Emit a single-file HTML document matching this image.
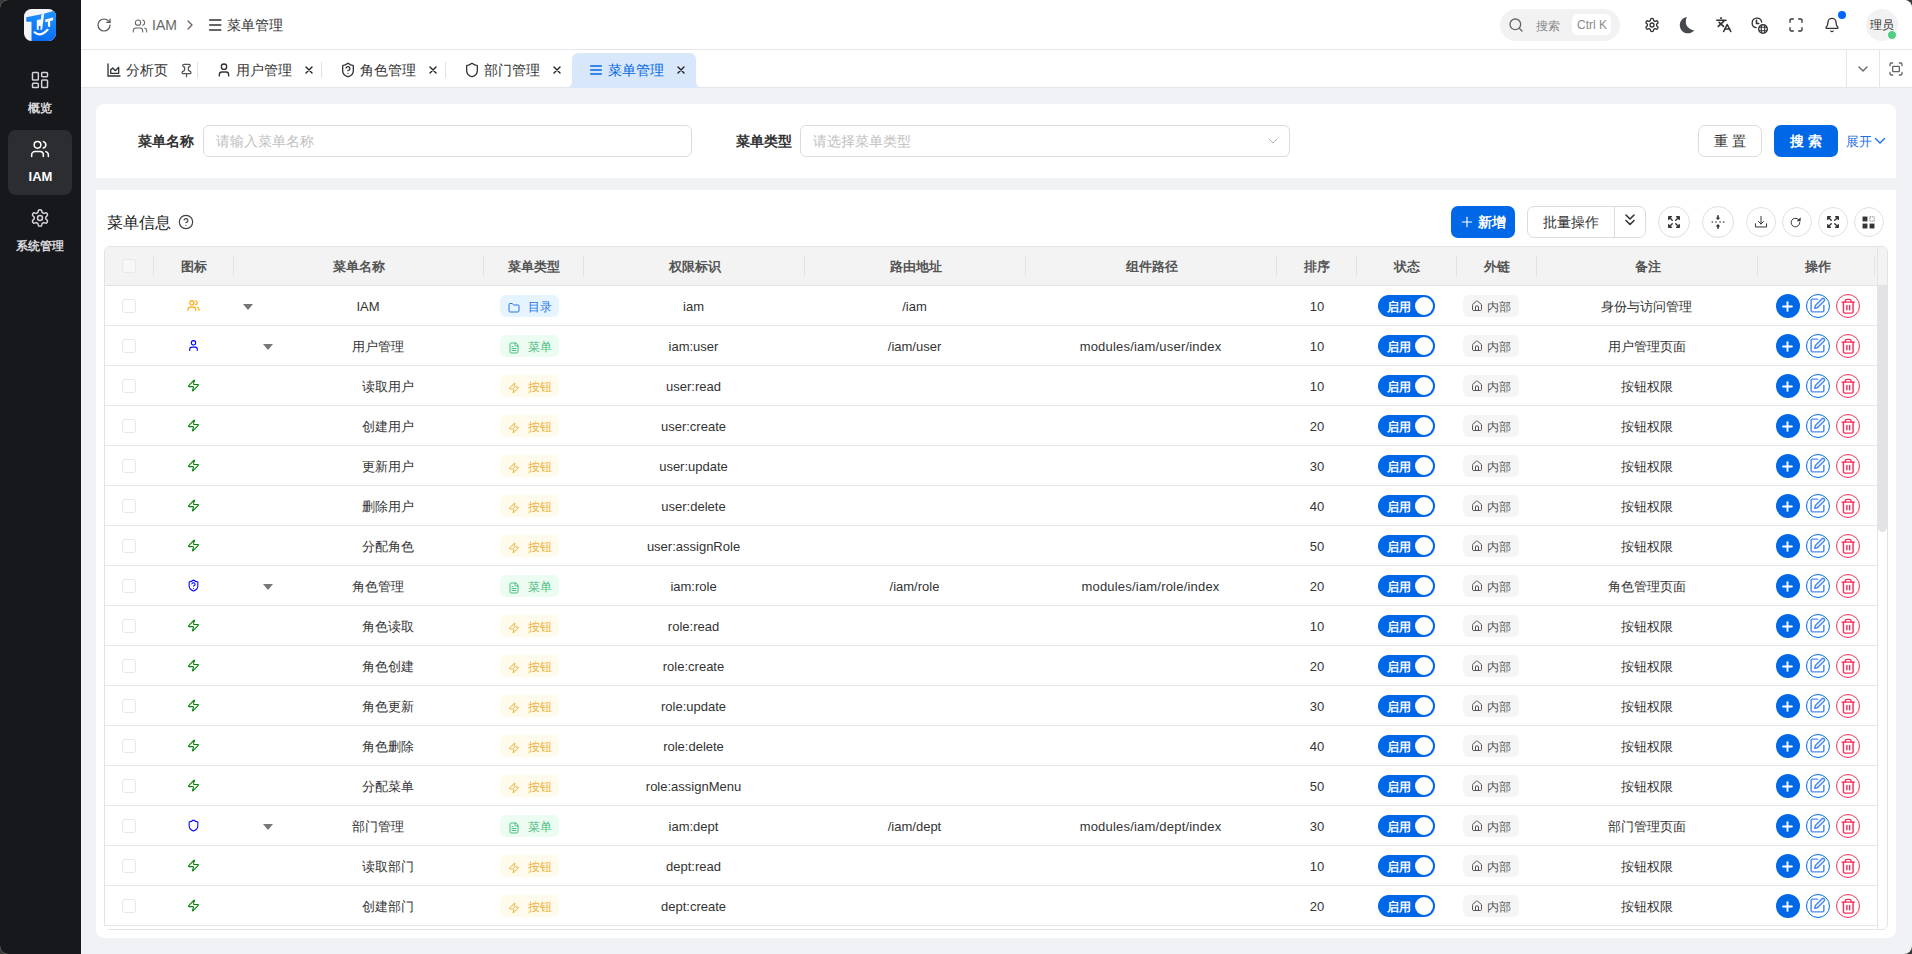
<!DOCTYPE html><html><head><meta charset="utf-8"><style>
*{box-sizing:border-box;margin:0;padding:0}
html,body{width:1912px;height:954px;overflow:hidden;background:#3a3a3a}
body{font-family:"Liberation Sans",sans-serif;color:#333;position:relative}
#win{position:absolute;left:0;top:0;width:1912px;height:954px;border-radius:8px;overflow:hidden;background:#f0f2f5}
.a{position:absolute;white-space:nowrap}
.ic{position:absolute;overflow:visible}
#side{position:absolute;left:0;top:0;width:81px;height:954px;background:#17181c}
#hdr{position:absolute;left:81px;top:0;right:0;height:50px;background:#fff;border-bottom:1px solid #e5e6ea}
#tabs{position:absolute;left:81px;top:50px;right:0;height:38px;background:#fff;border-bottom:1px solid #e5e6ea}
.card{position:absolute;background:#fff}
.t13{font-size:13px}
.th{position:absolute;top:247px;height:39px;font-size:13px;font-weight:bold;color:#555;padding-left:2px;text-align:center;line-height:39px}
.sep{position:absolute;width:1px;background:#e3e3e6}
.row{position:absolute;left:105px;width:1772px;height:40px;border-bottom:1px solid #e8e8ea;background:#fff}
.c{position:absolute;font-size:13px;color:#333;text-align:center;line-height:40px;top:0}
.cb{position:absolute;width:14px;height:14px;border:1px solid #e8e8ea;border-radius:3px;background:#fff}
.tag{position:absolute;height:22px;border-radius:6px;font-size:12px;line-height:22px}
.sw{position:absolute;width:57px;height:22px;border-radius:11px;background:#0068e6}
.knob{position:absolute;left:37px;top:2px;width:18px;height:18px;border-radius:50%;background:#fff}
.swt{position:absolute;left:9px;top:1px;font-size:12px;line-height:22px;color:#fff;font-weight:bold}
.ab{position:absolute;width:24px;height:24px;border-radius:50%}
</style></head><body><div id="win">
<div id="side">
<svg class="ic" style="left:24px;top:9px;width:32px;height:32px" viewBox="0 0 32 32">
<defs><linearGradient id="lg" x1="0.6" y1="0" x2="0.4" y2="1"><stop offset="0" stop-color="#1f93ff"/><stop offset="1" stop-color="#0a6cf0"/></linearGradient>
<clipPath id="lc"><rect width="32" height="32" rx="7.5"/></clipPath></defs>
<g clip-path="url(#lc)"><rect width="32" height="32" fill="#f3f6fa"/>
<path d="M2.3 8.2L17.2 5.3L19.9 4.8L32 1.2V32H7.5V12.8H2.3Z" fill="url(#lg)"/>
<path d="M17.3 5.4L20.2 4.7L18.1 20.7H12.8V11.1L17.0 10.3Z" fill="#f6f9fd"/>
<rect x="14.8" y="17" width="1.7" height="3.7" fill="#0d72f2"/>
<path d="M21.2 10.6L29.1 8.5V11.2L26.2 11.9V17.8H23.9V12.5L21.2 13.2Z" fill="#fff"/>
<path d="M10.6 23.3Q16.2 28.6 23.6 20.8" stroke="#fff" stroke-width="2.1" fill="none" stroke-linecap="round"/>
</g></svg>
<svg class="ic" style="left:30px;top:70px;width:20px;height:20px" viewBox="0 0 24 24" fill="none" stroke="#d4d4d8" stroke-width="1.8" stroke-linecap="round" stroke-linejoin="round" ><rect width="7" height="9" x="3" y="3" rx="1"/><rect width="7" height="5" x="14" y="3" rx="1"/><rect width="7" height="9" x="14" y="12" rx="1"/><rect width="7" height="5" x="3" y="16" rx="1"/></svg>
<div class="a" style="left:-1px;width:81px;text-align:center;top:99px;font-size:12px;line-height:18px;color:#d8d8dc;font-weight:bold">概览</div>
<div class="a" style="left:8px;top:130px;width:64px;height:65px;border-radius:8px;background:#2c2d31"></div>
<svg class="ic" style="left:30px;top:139px;width:20px;height:20px" viewBox="0 0 24 24" fill="none" stroke="#ffffff" stroke-width="1.8" stroke-linecap="round" stroke-linejoin="round" ><path d="M16 21v-2a4 4 0 0 0-4-4H6a4 4 0 0 0-4 4v2"/><circle cx="9" cy="7" r="4"/><path d="M22 21v-2a4 4 0 0 0-3-3.87"/><path d="M16 3.13a4 4 0 0 1 0 7.75"/></svg>
<div class="a" style="left:0;width:81px;text-align:center;top:168px;font-size:13px;line-height:18px;color:#fff;font-weight:bold">IAM</div>
<svg class="ic" style="left:30px;top:208px;width:20px;height:20px" viewBox="0 0 24 24" fill="none" stroke="#d4d4d8" stroke-width="1.8" stroke-linecap="round" stroke-linejoin="round" ><path d="M12.22 2h-.44a2 2 0 0 0-2 2v.18a2 2 0 0 1-1 1.73l-.43.25a2 2 0 0 1-2 0l-.15-.08a2 2 0 0 0-2.73.73l-.22.38a2 2 0 0 0 .73 2.730l.15.1a2 2 0 0 1 1 1.72v.51a2 2 0 0 1-1 1.74l-.15.09a2 2 0 0 0-.73 2.73l.22.38a2 2 0 0 0 2.73.73l.15-.08a2 2 0 0 1 2 0l.43.25a2 2 0 0 1 1 1.73V20a2 2 0 0 0 2 2h.44a2 2 0 0 0 2-2v-.18a2 2 0 0 1 1-1.73l.43-.25a2 2 0 0 1 2 0l.15.08a2 2 0 0 0 2.73-.73l.22-.39a2 2 0 0 0-.73-2.73l-.15-.08a2 2 0 0 1-1-1.74v-.5a2 2 0 0 1 1-1.74l.15-.09a2 2 0 0 0 .73-2.73l-.22-.38a2 2 0 0 0-2.73-.73l-.15.08a2 2 0 0 1-2 0l-.43-.25a2 2 0 0 1-1-1.73V4a2 2 0 0 0-2-2z"/><circle cx="12" cy="12" r="3"/></svg>
<div class="a" style="left:-1px;width:81px;text-align:center;top:237px;font-size:12px;line-height:18px;color:#d8d8dc;font-weight:bold">系统管理</div>
</div>
<div id="hdr"></div>
<svg class="ic" style="left:96px;top:17px;width:16px;height:16px" viewBox="0 0 24 24" fill="none" stroke="#555" stroke-width="1.8" stroke-linecap="round" stroke-linejoin="round" ><path d="M21 12a9 9 0 1 1-9-9c2.52 0 4.93 1 6.74 2.74L21 8"/><path d="M21 3v5h-5"/></svg>
<svg class="ic" style="left:132px;top:18px;width:16px;height:16px" viewBox="0 0 24 24" fill="none" stroke="#666" stroke-width="1.6" stroke-linecap="round" stroke-linejoin="round" ><path d="M16 21v-2a4 4 0 0 0-4-4H6a4 4 0 0 0-4 4v2"/><circle cx="9" cy="7" r="4"/><path d="M22 21v-2a4 4 0 0 0-3-3.87"/><path d="M16 3.13a4 4 0 0 1 0 7.75"/></svg>
<div class="a" style="left:152px;top:16px;font-size:14px;line-height:18px;color:#666">IAM</div>
<svg class="ic" style="left:182px;top:17px;width:16px;height:16px" viewBox="0 0 24 24" fill="none" stroke="#666" stroke-width="2" stroke-linecap="round" stroke-linejoin="round" ><path d="m9 18 6-6-6-6"/></svg>
<svg class="ic" style="left:207px;top:16px;width:16px;height:18px" viewBox="0 0 16 18" fill="none" stroke="#333" stroke-width="1.5" stroke-linecap="round"><path d="M2.6 4.1h11.2M2.6 9h11.2M2.6 13.9h11.2"/></svg>
<div class="a" style="left:227px;top:16px;font-size:14px;line-height:18px;color:#333">菜单管理</div>
<div class="a" style="left:1500px;top:9px;width:120px;height:32px;border-radius:16px;background:#f2f2f3"></div>
<svg class="ic" style="left:1508px;top:17px;width:16px;height:16px" viewBox="0 0 24 24" fill="none" stroke="#666" stroke-width="2" stroke-linecap="round" stroke-linejoin="round" ><circle cx="11" cy="11" r="8"/><path d="m21 21-4.3-4.3"/></svg>
<div class="a" style="left:1536px;top:18px;font-size:12px;line-height:16px;color:#8a8a8a">搜索</div>
<div class="a" style="left:1572px;top:14px;width:39px;height:21px;border-radius:6px;background:#fff"></div>
<div class="a" style="left:1577px;top:17px;font-size:12px;line-height:16px;color:#8a8a8a">Ctrl K</div>
<svg class="ic" style="left:1644px;top:17px;width:16px;height:16px" viewBox="0 0 24 24" fill="none" stroke="#333" stroke-width="2" stroke-linecap="round" stroke-linejoin="round" ><path d="M12.22 2h-.44a2 2 0 0 0-2 2v.18a2 2 0 0 1-1 1.73l-.43.25a2 2 0 0 1-2 0l-.15-.08a2 2 0 0 0-2.73.73l-.22.38a2 2 0 0 0 .73 2.730l.15.1a2 2 0 0 1 1 1.72v.51a2 2 0 0 1-1 1.74l-.15.09a2 2 0 0 0-.73 2.73l.22.38a2 2 0 0 0 2.73.73l.15-.08a2 2 0 0 1 2 0l.43.25a2 2 0 0 1 1 1.73V20a2 2 0 0 0 2 2h.44a2 2 0 0 0 2-2v-.18a2 2 0 0 1 1-1.73l.43-.25a2 2 0 0 1 2 0l.15.08a2 2 0 0 0 2.73-.73l.22-.39a2 2 0 0 0-.73-2.73l-.15-.08a2 2 0 0 1-1-1.74v-.5a2 2 0 0 1 1-1.74l.15-.09a2 2 0 0 0 .73-2.73l-.22-.38a2 2 0 0 0-2.73-.73l-.15.08a2 2 0 0 1-2 0l-.43-.25a2 2 0 0 1-1-1.73V4a2 2 0 0 0-2-2z"/><circle cx="12" cy="12" r="3"/></svg>
<svg class="ic" style="left:1670px;top:10px;width:30px;height:30px" viewBox="0 0 30 30"><path d="M17 6.9C11.5 8 9.6 12 9.8 15.5C10 20 13.5 23.3 17.5 23.3C20.5 23.3 22.8 21.8 24.3 20.4C19 19.8 15.6 15.5 15.8 11.5C15.9 9.5 16.3 8 17 6.9Z" fill="#45484d"/></svg>
<svg class="ic" style="left:1710px;top:12px;width:62px;height:26px" viewBox="0 0 62 26" fill="none" stroke="#2f3135" stroke-width="1.6" stroke-linecap="round" stroke-linejoin="round">
<defs><clipPath id="gc"><circle cx="53" cy="17" r="4.3"/></clipPath></defs>
<path d="M10.7 6.1h0.7"/><path d="M6.8 8.3h9.1"/><path d="M13.9 9.1L8.3 14.4"/><path d="M9.1 10.4L13.5 14.4"/><path d="M13.6 19.5L17.2 12.5L20.8 19.5"/><path d="M14.9 17h4.6"/>
<path d="M51.7 10.2A4.8 4.8 0 1 0 46.2 15.7" stroke-width="1.3"/><path d="M46.5 8.3V11.5H48.7"/>
<circle cx="53" cy="17" r="4.3" stroke-width="1.4"/><g clip-path="url(#gc)" stroke-width="1.1"><path d="M51.3 12v10M54.7 12v10M48 15.3h10M48 18.7h10"/></g>
</svg>
<svg class="ic" style="left:1788px;top:17px;width:16px;height:16px" viewBox="0 0 24 24" fill="none" stroke="#333" stroke-width="2" stroke-linecap="round" stroke-linejoin="round" ><path d="M8 3H5a2 2 0 0 0-2 2v3"/><path d="M21 8V5a2 2 0 0 0-2-2h-3"/><path d="M3 16v3a2 2 0 0 0 2 2h3"/><path d="M16 21h3a2 2 0 0 0 2-2v-3"/></svg>
<svg class="ic" style="left:1824px;top:17px;width:16px;height:16px" viewBox="0 0 24 24" fill="none" stroke="#333" stroke-width="2" stroke-linecap="round" stroke-linejoin="round" ><path d="M10.268 21a2 2 0 0 0 3.464 0"/><path d="M3.262 15.326A1 1 0 0 0 4 17h16a1 1 0 0 0 .74-1.673C19.41 13.956 18 12.499 18 8A6 6 0 0 0 6 8c0 4.499-1.411 5.956-2.738 7.326"/></svg>
<div class="a" style="left:1838px;top:11px;width:8px;height:8px;border-radius:50%;background:#0066ff"></div>
<div class="a" style="left:1866px;top:9px;width:32px;height:32px;border-radius:50%;background:#f2f2f3"></div>
<div class="a" style="left:1870px;top:17px;font-size:12px;line-height:16px;color:#333">理员</div>
<div class="a" style="left:1887px;top:30px;width:10px;height:10px;border-radius:50%;background:#4fcf80;border:1.5px solid #fff"></div>
<div id="tabs"></div>
<svg class="ic" style="left:565px;top:53px;width:138px;height:35px" viewBox="0 0 138 35"><path d="M0 35Q7 35 7 28V7Q7 0 14 0H124Q131 0 131 7V28Q131 35 138 35Z" fill="#d9e7fb"/></svg>
<svg class="ic" style="left:106px;top:62px;width:16px;height:16px" viewBox="0 0 24 24" fill="none" stroke="#333" stroke-width="2" stroke-linecap="round" stroke-linejoin="round" ><path d="M3 3v18h18"/><path d="M7 12v5h12V8l-5 5-4-4Z"/></svg>
<div class="a" style="left:126px;top:61px;font-size:14px;line-height:18px;color:#333">分析页</div>
<svg class="ic" style="left:179px;top:63px;width:15px;height:15px" viewBox="0 0 24 24" fill="none" stroke="#555" stroke-width="2" stroke-linecap="round" stroke-linejoin="round" ><path d="M12 17v5"/><path d="M9 10.76a2 2 0 0 1-1.11 1.79l-1.78.9A2 2 0 0 0 5 15.24V16a1 1 0 0 0 1 1h12a1 1 0 0 0 1-1v-.76a2 2 0 0 0-1.11-1.79l-1.78-.9A2 2 0 0 1 15 10.76V7a1 1 0 0 1 1-1 2 2 0 0 0 0-4H8a2 2 0 0 0 0 4 1 1 0 0 1 1 1z"/></svg>
<div class="sep" style="left:197px;top:62px;height:16px;background:#e0e0e3"></div>
<svg class="ic" style="left:216px;top:62px;width:16px;height:16px" viewBox="0 0 24 24" fill="none" stroke="#333" stroke-width="2" stroke-linecap="round" stroke-linejoin="round" ><path d="M19 21v-2a4 4 0 0 0-4-4H9a4 4 0 0 0-4 4v2"/><circle cx="12" cy="7" r="4"/></svg>
<div class="a" style="left:236px;top:61px;font-size:14px;line-height:18px;color:#333">用户管理</div>
<svg class="ic" style="left:304px;top:65px;width:10px;height:10px" viewBox="0 0 10 10" fill="none" stroke="#222" stroke-width="1.4" stroke-linecap="round"><path d="M2 2L8 8M8 2L2 8"/></svg>
<div class="sep" style="left:321px;top:62px;height:16px;background:#e0e0e3"></div>
<svg class="ic" style="left:340px;top:62px;width:16px;height:16px" viewBox="0 0 24 24" fill="none" stroke="#333" stroke-width="2" stroke-linecap="round" stroke-linejoin="round" ><path d="M20 13c0 5-3.5 7.5-7.66 8.95a1 1 0 0 1-.67-.01C7.5 20.5 4 18 4 13V6a1 1 0 0 1 1-1c2 0 4.5-1.2 6.24-2.72a1.17 1.17 0 0 1 1.52 0C14.51 3.81 17 5 19 5a1 1 0 0 1 1 1z"/><path d="M9.1 9a3 3 0 0 1 5.82 1c0 2-3 3-3 3"/><path d="M12 17h.01"/></svg>
<div class="a" style="left:360px;top:61px;font-size:14px;line-height:18px;color:#333">角色管理</div>
<svg class="ic" style="left:428.2px;top:65px;width:10px;height:10px" viewBox="0 0 10 10" fill="none" stroke="#222" stroke-width="1.4" stroke-linecap="round"><path d="M2 2L8 8M8 2L2 8"/></svg>
<div class="sep" style="left:445px;top:62px;height:16px;background:#e0e0e3"></div>
<svg class="ic" style="left:464px;top:62px;width:16px;height:16px" viewBox="0 0 24 24" fill="none" stroke="#333" stroke-width="2" stroke-linecap="round" stroke-linejoin="round" ><path d="M20 13c0 5-3.5 7.5-7.66 8.95a1 1 0 0 1-.67-.01C7.5 20.5 4 18 4 13V6a1 1 0 0 1 1-1c2 0 4.5-1.2 6.24-2.72a1.17 1.17 0 0 1 1.52 0C14.51 3.81 17 5 19 5a1 1 0 0 1 1 1z"/></svg>
<div class="a" style="left:484px;top:61px;font-size:14px;line-height:18px;color:#333">部门管理</div>
<svg class="ic" style="left:552px;top:65px;width:10px;height:10px" viewBox="0 0 10 10" fill="none" stroke="#222" stroke-width="1.4" stroke-linecap="round"><path d="M2 2L8 8M8 2L2 8"/></svg>
<svg class="ic" style="left:588px;top:62px;width:16px;height:16px" viewBox="0 0 24 24" fill="none" stroke="#0068e6" stroke-width="2" stroke-linecap="round" stroke-linejoin="round" ><path d="M4 6h16M4 12h16M4 18h16"/></svg>
<div class="a" style="left:608px;top:61px;font-size:14px;line-height:18px;color:#0068e6">菜单管理</div>
<svg class="ic" style="left:676.2px;top:65px;width:10px;height:10px" viewBox="0 0 10 10" fill="none" stroke="#222" stroke-width="1.4" stroke-linecap="round"><path d="M2 2L8 8M8 2L2 8"/></svg>
<div class="sep" style="left:1846px;top:50px;height:37px;background:#e5e6ea"></div>
<div class="sep" style="left:1879px;top:50px;height:37px;background:#e5e6ea"></div>
<svg class="ic" style="left:1855px;top:61px;width:16px;height:16px" viewBox="0 0 24 24" fill="none" stroke="#666" stroke-width="2" stroke-linecap="round" stroke-linejoin="round" ><path d="m6 9 6 6 6-6"/></svg>
<svg class="ic" style="left:1888px;top:61px;width:16px;height:16px" viewBox="0 0 24 24" fill="none" stroke="#666" stroke-width="2" stroke-linecap="round" stroke-linejoin="round" ><path d="M7 3H5a2 2 0 0 0-2 2v2"/><path d="M21 7V5a2 2 0 0 0-2-2h-2"/><path d="M3 17v2a2 2 0 0 0 2 2h2"/><path d="M17 21h2a2 2 0 0 0 2-2v-2"/><rect x="7" y="8" width="10" height="8" rx="1"/></svg>
<div class="card" style="left:96px;top:104px;width:1800px;height:74px;border-radius:8px 8px 0 0"></div>
<div class="a" style="left:138px;top:132px;font-size:14px;line-height:18px;font-weight:bold;color:#333">菜单名称</div>
<div class="a" style="left:203px;top:125px;width:489px;height:32px;border:1px solid #dcdcdf;border-radius:6px"></div>
<div class="a" style="left:216px;top:132px;font-size:14px;line-height:18px;color:#bfbfbf">请输入菜单名称</div>
<div class="a" style="left:736px;top:132px;font-size:14px;line-height:18px;font-weight:bold;color:#333">菜单类型</div>
<div class="a" style="left:800px;top:125px;width:490px;height:32px;border:1px solid #dcdcdf;border-radius:6px"></div>
<div class="a" style="left:813px;top:132px;font-size:14px;line-height:18px;color:#bfbfbf">请选择菜单类型</div>
<svg class="ic" style="left:1265px;top:133px;width:16px;height:16px" viewBox="0 0 24 24" fill="none" stroke="#b0b0b0" stroke-width="1.5" stroke-linecap="round" stroke-linejoin="round" ><path d="m6 9 6 6 6-6"/></svg>
<div class="a" style="left:1698px;top:125px;width:64px;height:32px;border:1px solid #dcdcdf;border-radius:7px"></div>
<div class="a" style="left:1698px;top:132px;width:64px;text-align:center;font-size:14px;line-height:18px;color:#333;letter-spacing:4px;padding-left:4px">重置</div>
<div class="a" style="left:1774px;top:125px;width:64px;height:32px;border-radius:7px;background:#0068e6"></div>
<div class="a" style="left:1774px;top:132px;width:64px;text-align:center;font-size:14px;line-height:18px;color:#fff;letter-spacing:4px;padding-left:4px;font-weight:bold">搜索</div>
<div class="a" style="left:1846px;top:133px;font-size:13px;line-height:18px;color:#1a6fe8">展开</div>
<svg class="ic" style="left:1874px;top:137px;width:12px;height:8px" viewBox="0 0 12 8" fill="none" stroke="#1a6fe8" stroke-width="1.4" stroke-linecap="round" stroke-linejoin="round"><path d="M1.5 1.5l4.5 4.5 4.5-4.5"/></svg>
<div class="card" style="left:96px;top:190px;width:1800px;height:748px;border-radius:0 0 8px 8px"></div>
<div class="a" style="left:107px;top:213px;font-size:16px;line-height:20px;color:#222">菜单信息</div>
<svg class="ic" style="left:178px;top:214px;width:16px;height:16px" viewBox="0 0 24 24" fill="none" stroke="#444" stroke-width="1.8" stroke-linecap="round" stroke-linejoin="round" ><circle cx="12" cy="12" r="10"/><path d="M9.09 9a3 3 0 0 1 5.83 1c0 2-3 3-3 3"/><path d="M12 17h.01"/></svg>
<div class="a" style="left:1451px;top:206px;width:64px;height:32px;border-radius:7px;background:#0068e6"></div>
<svg class="ic" style="left:1459px;top:214px;width:16px;height:16px" viewBox="0 0 24 24" fill="none" stroke="#fff" stroke-width="1.7" stroke-linecap="round" stroke-linejoin="round" ><path d="M5 12h14"/><path d="M12 5v14"/></svg>
<div class="a" style="left:1478px;top:213px;font-size:14px;line-height:18px;color:#fff;font-weight:bold">新增</div>
<div class="a" style="left:1527px;top:206px;width:119px;height:32px;border:1px solid #dcdcdf;border-radius:7px"></div>
<div class="sep" style="left:1614px;top:206px;height:32px;background:#dcdcdf"></div>
<div class="a" style="left:1543px;top:213px;font-size:14px;line-height:18px;color:#333">批量操作</div>
<svg class="ic" style="left:1624px;top:213px;width:12px;height:14px" viewBox="0 0 12 14" fill="none" stroke="#333" stroke-width="1.6" stroke-linecap="round" stroke-linejoin="round"><path d="M2 2l4 4 4-4M2 7.5l4 4 4-4"/></svg>
<div class="a" style="left:1658px;top:206px;width:32px;height:32px;border-radius:50%;border:1px solid #e0e0e3"></div>
<div class="a" style="left:1702px;top:206px;width:32px;height:32px;border-radius:50%;border:1px solid #e0e0e3"></div>
<div class="a" style="left:1746px;top:207px;width:30px;height:30px;border-radius:50%;border:1px solid #e0e0e3"></div>
<div class="a" style="left:1782px;top:207px;width:30px;height:30px;border-radius:50%;border:1px solid #e0e0e3"></div>
<div class="a" style="left:1818px;top:207px;width:30px;height:30px;border-radius:50%;border:1px solid #e0e0e3"></div>
<div class="a" style="left:1854px;top:207px;width:30px;height:30px;border-radius:50%;border:1px solid #e0e0e3"></div>
<svg class="ic" style="left:1667px;top:215px;width:14px;height:14px" viewBox="0 0 24 24" fill="none" stroke="#333" stroke-width="2.4" stroke-linecap="round" stroke-linejoin="round" ><path d="M3 3l6 6M3 3v4.5M3 3h4.5M21 3l-6 6M21 3v4.5M21 3h-4.5M3 21l6-6M3 21v-4.5M3 21h4.5M21 21l-6-6M21 21v-4.5M21 21h-4.5"/></svg>
<svg class="ic" style="left:1711px;top:215px;width:14px;height:14px" viewBox="0 0 24 24" fill="#333" stroke="none"><path d="M12 8.5l-4-4h2.6V0.5h2.8v4H16z"/><path d="M12 15.5l-4 4h2.6v4h2.8v-4H16z"/><rect x="1" y="11" width="2.6" height="2"/><rect x="7.2" y="11" width="2.6" height="2"/><rect x="14.2" y="11" width="2.6" height="2"/><rect x="20.4" y="11" width="2.6" height="2"/></svg>
<svg class="ic" style="left:1754px;top:215px;width:14px;height:14px" viewBox="0 0 24 24" fill="none" stroke="#333" stroke-width="1.7" stroke-linecap="round" stroke-linejoin="round"><path d="M2.5 15v5.5h19V15"/><path d="M12 2.5v13M7.5 11l4.5 4.5 4.5-4.5"/></svg>
<svg class="ic" style="left:1789px;top:216px;width:13px;height:13px" viewBox="0 0 24 24" fill="none" stroke="#333" stroke-width="1.8" stroke-linecap="round" stroke-linejoin="round"><path d="M20 12a8 8 0 1 1-2.5-5.8"/></svg>
<svg class="ic" style="left:1789px;top:216px;width:13px;height:13px" viewBox="0 0 24 24" fill="#333" stroke="none"><path d="M21.5 2.5v7h-7z"/></svg>
<svg class="ic" style="left:1826px;top:215px;width:14px;height:14px" viewBox="0 0 24 24" fill="none" stroke="#333" stroke-width="2.4" stroke-linecap="round" stroke-linejoin="round" ><path d="M3 3l6 6M3 3v4.5M3 3h4.5M21 3l-6 6M21 3v4.5M21 3h-4.5M3 21l6-6M3 21v-4.5M3 21h4.5M21 21l-6-6M21 21v-4.5M21 21h-4.5"/></svg>
<svg class="ic" style="left:1862px;top:216px;width:13px;height:13px" viewBox="0 0 24 24"><rect x="1" y="1" width="9" height="9" fill="#333"/><rect x="14" y="14" width="9" height="9" fill="#333"/><rect x="1" y="14" width="9" height="9" fill="#333"/><rect x="14.5" y="1.5" width="8" height="8" fill="none" stroke="#333" stroke-width="1.2" stroke-dasharray="2 1.5"/></svg>
<div class="a" style="left:104px;top:246px;width:1784px;height:684px;border:1px solid #e3e3e6;border-radius:6px;overflow:hidden;background:#fff">
<div class="a" style="left:0;top:0;width:1782px;height:39px;background:#f3f3f4;border-bottom:1px solid #e3e3e6"></div>
</div>
<div class="sep" style="left:153px;top:256px;height:20px"></div>
<div class="th" style="left:153px;width:80px">图标</div>
<div class="sep" style="left:233px;top:256px;height:20px"></div>
<div class="th" style="left:233px;width:250px">菜单名称</div>
<div class="sep" style="left:483px;top:256px;height:20px"></div>
<div class="th" style="left:483px;width:100px">菜单类型</div>
<div class="sep" style="left:583px;top:256px;height:20px"></div>
<div class="th" style="left:583px;width:221px">权限标识</div>
<div class="sep" style="left:804px;top:256px;height:20px"></div>
<div class="th" style="left:804px;width:221px">路由地址</div>
<div class="sep" style="left:1025px;top:256px;height:20px"></div>
<div class="th" style="left:1025px;width:251px">组件路径</div>
<div class="sep" style="left:1276px;top:256px;height:20px"></div>
<div class="th" style="left:1276px;width:80px">排序</div>
<div class="sep" style="left:1356px;top:256px;height:20px"></div>
<div class="th" style="left:1356px;width:100px">状态</div>
<div class="sep" style="left:1456px;top:256px;height:20px"></div>
<div class="th" style="left:1456px;width:80px">外链</div>
<div class="sep" style="left:1536px;top:256px;height:20px"></div>
<div class="th" style="left:1536px;width:221px">备注</div>
<div class="sep" style="left:1757px;top:256px;height:20px"></div>
<div class="th" style="left:1757px;width:120px">操作</div>
<div class="sep" style="left:1874px;top:256px;height:20px"></div>
<div class="cb" style="left:122px;top:259px;background:#f7f7f8"></div>
<div class="row" style="top:286px"></div>
<div class="cb" style="left:122px;top:299px"></div>
<svg class="ic" style="left:187px;top:299px;width:13px;height:13px" viewBox="0 0 24 24" fill="none" stroke="orange" stroke-width="2" stroke-linecap="round" stroke-linejoin="round" ><path d="M16 21v-2a4 4 0 0 0-4-4H6a4 4 0 0 0-4 4v2"/><circle cx="9" cy="7" r="4"/><path d="M22 21v-2a4 4 0 0 0-3-3.87"/><path d="M16 3.13a4 4 0 0 1 0 7.75"/></svg>
<svg class="ic" style="left:243px;top:304px;width:10px;height:6px" viewBox="0 0 10 6"><path d="M0 0H10L5 6Z" fill="#777"/></svg>
<div class="c" style="left:268px;width:200px;top:287px">IAM</div>
<div class="tag" style="left:500px;top:295px;width:59px;background:#e6f4ff"></div>
<svg class="ic" style="left:508px;top:301.5px;width:12px;height:12px" viewBox="0 0 24 24" fill="none" stroke="#2374ec" stroke-width="2" stroke-linecap="round" stroke-linejoin="round" ><path d="M20 20a2 2 0 0 0 2-2V8a2 2 0 0 0-2-2h-7.9a2 2 0 0 1-1.69-.9L9.6 3.9A2 2 0 0 0 7.930 3H4a2 2 0 0 0-2 2v13a2 2 0 0 0 2 2Z"/></svg>
<div class="a" style="left:528px;top:299px;font-size:12px;line-height:16px;color:#2374ec">目录</div>
<div class="c" style="left:583px;width:221px;top:287px">iam</div>
<div class="c" style="left:804px;width:221px;top:287px">/iam</div>
<div class="c" style="left:1277px;width:80px;top:287px">10</div>
<div class="sw" style="left:1378px;top:295px"><span class="swt">启用</span><span class="knob"></span></div>
<div class="tag" style="left:1463px;top:295px;width:56px;background:#f5f5f6"></div>
<svg class="ic" style="left:1471px;top:300px;width:12px;height:12px" viewBox="0 0 24 24" fill="none" stroke="#555" stroke-width="2" stroke-linecap="round" stroke-linejoin="round" ><path d="M15 21v-8a1 1 0 0 0-1-1h-4a1 1 0 0 0-1 1v8"/><path d="M3 10a2 2 0 0 1 .709-1.528l7-5.999a2 2 0 0 1 2.582 0l7 5.999A2 2 0 0 1 21 10v9a2 2 0 0 1-2 2H5a2 2 0 0 1-2-2z"/></svg>
<div class="a" style="left:1487px;top:299px;font-size:12px;line-height:16px;color:#555">内部</div>
<div class="c" style="left:1536px;width:221px;top:287px">身份与访问管理</div>
<div class="ab" style="left:1776px;top:294px;background:#0068e6"></div>
<svg class="ic" style="left:1780px;top:298.5px;width:15px;height:15px" viewBox="0 0 24 24" fill="none" stroke="#fff" stroke-width="3.1" stroke-linecap="round" stroke-linejoin="round" ><path d="M5 12h14"/><path d="M12 5v14"/></svg>
<div class="ab" style="left:1806px;top:294px;border:1.5px solid #0068e6"></div>
<svg class="ic" style="left:1809px;top:297px;width:17px;height:17px" viewBox="0 0 24 24" fill="none" stroke="#4a8af4" stroke-width="2.1" stroke-linecap="round" stroke-linejoin="round" ><path d="M12 3H5a2 2 0 0 0-2 2v14a2 2 0 0 0 2 2h14a2 2 0 0 0 2-2v-7"/><path d="M18.375 2.625a1 1 0 0 1 3 3l-9.013 9.014a2 2 0 0 1-.853.505l-2.873.84a.5.5 0 0 1-.62-.62l.84-2.873a2 2 0 0 1 .506-.852z"/></svg>
<div class="ab" style="left:1836px;top:294px;border:1.5px solid #f5315a"></div>
<svg class="ic" style="left:1839.5px;top:297.5px;width:16.5px;height:16.5px" viewBox="0 0 24 24" fill="none" stroke="#f5315a" stroke-width="2.1" stroke-linecap="round" stroke-linejoin="round" ><path d="M3 6h18"/><path d="M19 6v14c0 1-1 2-2 2H7c-1 0-2-1-2-2V6"/><path d="M8 6V4c0-1 1-2 2-2h4c1 0 2 1 2 2v2"/><line x1="10" x2="10" y1="11" y2="17"/><line x1="14" x2="14" y1="11" y2="17"/></svg>
<div class="row" style="top:326px"></div>
<div class="cb" style="left:122px;top:339px"></div>
<svg class="ic" style="left:187px;top:339px;width:13px;height:13px" viewBox="0 0 24 24" fill="none" stroke="blue" stroke-width="2" stroke-linecap="round" stroke-linejoin="round" ><path d="M19 21v-2a4 4 0 0 0-4-4H9a4 4 0 0 0-4 4v2"/><circle cx="12" cy="7" r="4"/></svg>
<svg class="ic" style="left:263px;top:344px;width:10px;height:6px" viewBox="0 0 10 6"><path d="M0 0H10L5 6Z" fill="#777"/></svg>
<div class="c" style="left:278px;width:200px;top:327px">用户管理</div>
<div class="tag" style="left:500px;top:335px;width:59px;background:#edfcf2"></div>
<svg class="ic" style="left:508px;top:341.5px;width:12px;height:12px" viewBox="0 0 24 24" fill="none" stroke="#45c07c" stroke-width="2" stroke-linecap="round" stroke-linejoin="round" ><path d="M15 2H6a2 2 0 0 0-2 2v16a2 2 0 0 0 2 2h12a2 2 0 0 0 2-2V7Z"/><path d="M14 2v4a2 2 0 0 0 2 2h4"/><path d="M10 9H8"/><path d="M16 13H8"/><path d="M16 17H8"/></svg>
<div class="a" style="left:528px;top:339px;font-size:12px;line-height:16px;color:#45c07c">菜单</div>
<div class="c" style="left:583px;width:221px;top:327px">iam:user</div>
<div class="c" style="left:804px;width:221px;top:327px">/iam/user</div>
<div class="c" style="left:1025px;width:251px;top:327px;letter-spacing:0.2px">modules/iam/user/index</div>
<div class="c" style="left:1277px;width:80px;top:327px">10</div>
<div class="sw" style="left:1378px;top:335px"><span class="swt">启用</span><span class="knob"></span></div>
<div class="tag" style="left:1463px;top:335px;width:56px;background:#f5f5f6"></div>
<svg class="ic" style="left:1471px;top:340px;width:12px;height:12px" viewBox="0 0 24 24" fill="none" stroke="#555" stroke-width="2" stroke-linecap="round" stroke-linejoin="round" ><path d="M15 21v-8a1 1 0 0 0-1-1h-4a1 1 0 0 0-1 1v8"/><path d="M3 10a2 2 0 0 1 .709-1.528l7-5.999a2 2 0 0 1 2.582 0l7 5.999A2 2 0 0 1 21 10v9a2 2 0 0 1-2 2H5a2 2 0 0 1-2-2z"/></svg>
<div class="a" style="left:1487px;top:339px;font-size:12px;line-height:16px;color:#555">内部</div>
<div class="c" style="left:1536px;width:221px;top:327px">用户管理页面</div>
<div class="ab" style="left:1776px;top:334px;background:#0068e6"></div>
<svg class="ic" style="left:1780px;top:338.5px;width:15px;height:15px" viewBox="0 0 24 24" fill="none" stroke="#fff" stroke-width="3.1" stroke-linecap="round" stroke-linejoin="round" ><path d="M5 12h14"/><path d="M12 5v14"/></svg>
<div class="ab" style="left:1806px;top:334px;border:1.5px solid #0068e6"></div>
<svg class="ic" style="left:1809px;top:337px;width:17px;height:17px" viewBox="0 0 24 24" fill="none" stroke="#4a8af4" stroke-width="2.1" stroke-linecap="round" stroke-linejoin="round" ><path d="M12 3H5a2 2 0 0 0-2 2v14a2 2 0 0 0 2 2h14a2 2 0 0 0 2-2v-7"/><path d="M18.375 2.625a1 1 0 0 1 3 3l-9.013 9.014a2 2 0 0 1-.853.505l-2.873.84a.5.5 0 0 1-.62-.62l.84-2.873a2 2 0 0 1 .506-.852z"/></svg>
<div class="ab" style="left:1836px;top:334px;border:1.5px solid #f5315a"></div>
<svg class="ic" style="left:1839.5px;top:337.5px;width:16.5px;height:16.5px" viewBox="0 0 24 24" fill="none" stroke="#f5315a" stroke-width="2.1" stroke-linecap="round" stroke-linejoin="round" ><path d="M3 6h18"/><path d="M19 6v14c0 1-1 2-2 2H7c-1 0-2-1-2-2V6"/><path d="M8 6V4c0-1 1-2 2-2h4c1 0 2 1 2 2v2"/><line x1="10" x2="10" y1="11" y2="17"/><line x1="14" x2="14" y1="11" y2="17"/></svg>
<div class="row" style="top:366px"></div>
<div class="cb" style="left:122px;top:379px"></div>
<svg class="ic" style="left:187px;top:379px;width:13px;height:13px" viewBox="0 0 24 24" fill="none" stroke="green" stroke-width="2" stroke-linecap="round" stroke-linejoin="round" ><path d="M4 14a1 1 0 0 1-.78-1.63l9.9-10.2a.5.5 0 0 1 .86.46l-1.92 6.02A1 1 0 0 0 13 10h7a1 1 0 0 1 .78 1.63l-9.9 10.2a.5.5 0 0 1-.86-.46l1.92-6.02A1 1 0 0 0 11 14z"/></svg>
<div class="c" style="left:288px;width:200px;top:367px">读取用户</div>
<div class="tag" style="left:500px;top:375px;width:59px;background:#fffbec"></div>
<svg class="ic" style="left:508px;top:381.5px;width:12px;height:12px" viewBox="0 0 24 24" fill="none" stroke="#f0b23a" stroke-width="2" stroke-linecap="round" stroke-linejoin="round" ><path d="M4 14a1 1 0 0 1-.78-1.63l9.9-10.2a.5.5 0 0 1 .86.46l-1.92 6.02A1 1 0 0 0 13 10h7a1 1 0 0 1 .78 1.63l-9.9 10.2a.5.5 0 0 1-.86-.46l1.92-6.02A1 1 0 0 0 11 14z"/></svg>
<div class="a" style="left:528px;top:379px;font-size:12px;line-height:16px;color:#f0b23a">按钮</div>
<div class="c" style="left:583px;width:221px;top:367px">user:read</div>
<div class="c" style="left:1277px;width:80px;top:367px">10</div>
<div class="sw" style="left:1378px;top:375px"><span class="swt">启用</span><span class="knob"></span></div>
<div class="tag" style="left:1463px;top:375px;width:56px;background:#f5f5f6"></div>
<svg class="ic" style="left:1471px;top:380px;width:12px;height:12px" viewBox="0 0 24 24" fill="none" stroke="#555" stroke-width="2" stroke-linecap="round" stroke-linejoin="round" ><path d="M15 21v-8a1 1 0 0 0-1-1h-4a1 1 0 0 0-1 1v8"/><path d="M3 10a2 2 0 0 1 .709-1.528l7-5.999a2 2 0 0 1 2.582 0l7 5.999A2 2 0 0 1 21 10v9a2 2 0 0 1-2 2H5a2 2 0 0 1-2-2z"/></svg>
<div class="a" style="left:1487px;top:379px;font-size:12px;line-height:16px;color:#555">内部</div>
<div class="c" style="left:1536px;width:221px;top:367px">按钮权限</div>
<div class="ab" style="left:1776px;top:374px;background:#0068e6"></div>
<svg class="ic" style="left:1780px;top:378.5px;width:15px;height:15px" viewBox="0 0 24 24" fill="none" stroke="#fff" stroke-width="3.1" stroke-linecap="round" stroke-linejoin="round" ><path d="M5 12h14"/><path d="M12 5v14"/></svg>
<div class="ab" style="left:1806px;top:374px;border:1.5px solid #0068e6"></div>
<svg class="ic" style="left:1809px;top:377px;width:17px;height:17px" viewBox="0 0 24 24" fill="none" stroke="#4a8af4" stroke-width="2.1" stroke-linecap="round" stroke-linejoin="round" ><path d="M12 3H5a2 2 0 0 0-2 2v14a2 2 0 0 0 2 2h14a2 2 0 0 0 2-2v-7"/><path d="M18.375 2.625a1 1 0 0 1 3 3l-9.013 9.014a2 2 0 0 1-.853.505l-2.873.84a.5.5 0 0 1-.62-.62l.84-2.873a2 2 0 0 1 .506-.852z"/></svg>
<div class="ab" style="left:1836px;top:374px;border:1.5px solid #f5315a"></div>
<svg class="ic" style="left:1839.5px;top:377.5px;width:16.5px;height:16.5px" viewBox="0 0 24 24" fill="none" stroke="#f5315a" stroke-width="2.1" stroke-linecap="round" stroke-linejoin="round" ><path d="M3 6h18"/><path d="M19 6v14c0 1-1 2-2 2H7c-1 0-2-1-2-2V6"/><path d="M8 6V4c0-1 1-2 2-2h4c1 0 2 1 2 2v2"/><line x1="10" x2="10" y1="11" y2="17"/><line x1="14" x2="14" y1="11" y2="17"/></svg>
<div class="row" style="top:406px"></div>
<div class="cb" style="left:122px;top:419px"></div>
<svg class="ic" style="left:187px;top:419px;width:13px;height:13px" viewBox="0 0 24 24" fill="none" stroke="green" stroke-width="2" stroke-linecap="round" stroke-linejoin="round" ><path d="M4 14a1 1 0 0 1-.78-1.63l9.9-10.2a.5.5 0 0 1 .86.46l-1.92 6.02A1 1 0 0 0 13 10h7a1 1 0 0 1 .78 1.63l-9.9 10.2a.5.5 0 0 1-.86-.46l1.92-6.02A1 1 0 0 0 11 14z"/></svg>
<div class="c" style="left:288px;width:200px;top:407px">创建用户</div>
<div class="tag" style="left:500px;top:415px;width:59px;background:#fffbec"></div>
<svg class="ic" style="left:508px;top:421.5px;width:12px;height:12px" viewBox="0 0 24 24" fill="none" stroke="#f0b23a" stroke-width="2" stroke-linecap="round" stroke-linejoin="round" ><path d="M4 14a1 1 0 0 1-.78-1.63l9.9-10.2a.5.5 0 0 1 .86.46l-1.92 6.02A1 1 0 0 0 13 10h7a1 1 0 0 1 .78 1.63l-9.9 10.2a.5.5 0 0 1-.86-.46l1.92-6.02A1 1 0 0 0 11 14z"/></svg>
<div class="a" style="left:528px;top:419px;font-size:12px;line-height:16px;color:#f0b23a">按钮</div>
<div class="c" style="left:583px;width:221px;top:407px">user:create</div>
<div class="c" style="left:1277px;width:80px;top:407px">20</div>
<div class="sw" style="left:1378px;top:415px"><span class="swt">启用</span><span class="knob"></span></div>
<div class="tag" style="left:1463px;top:415px;width:56px;background:#f5f5f6"></div>
<svg class="ic" style="left:1471px;top:420px;width:12px;height:12px" viewBox="0 0 24 24" fill="none" stroke="#555" stroke-width="2" stroke-linecap="round" stroke-linejoin="round" ><path d="M15 21v-8a1 1 0 0 0-1-1h-4a1 1 0 0 0-1 1v8"/><path d="M3 10a2 2 0 0 1 .709-1.528l7-5.999a2 2 0 0 1 2.582 0l7 5.999A2 2 0 0 1 21 10v9a2 2 0 0 1-2 2H5a2 2 0 0 1-2-2z"/></svg>
<div class="a" style="left:1487px;top:419px;font-size:12px;line-height:16px;color:#555">内部</div>
<div class="c" style="left:1536px;width:221px;top:407px">按钮权限</div>
<div class="ab" style="left:1776px;top:414px;background:#0068e6"></div>
<svg class="ic" style="left:1780px;top:418.5px;width:15px;height:15px" viewBox="0 0 24 24" fill="none" stroke="#fff" stroke-width="3.1" stroke-linecap="round" stroke-linejoin="round" ><path d="M5 12h14"/><path d="M12 5v14"/></svg>
<div class="ab" style="left:1806px;top:414px;border:1.5px solid #0068e6"></div>
<svg class="ic" style="left:1809px;top:417px;width:17px;height:17px" viewBox="0 0 24 24" fill="none" stroke="#4a8af4" stroke-width="2.1" stroke-linecap="round" stroke-linejoin="round" ><path d="M12 3H5a2 2 0 0 0-2 2v14a2 2 0 0 0 2 2h14a2 2 0 0 0 2-2v-7"/><path d="M18.375 2.625a1 1 0 0 1 3 3l-9.013 9.014a2 2 0 0 1-.853.505l-2.873.84a.5.5 0 0 1-.62-.62l.84-2.873a2 2 0 0 1 .506-.852z"/></svg>
<div class="ab" style="left:1836px;top:414px;border:1.5px solid #f5315a"></div>
<svg class="ic" style="left:1839.5px;top:417.5px;width:16.5px;height:16.5px" viewBox="0 0 24 24" fill="none" stroke="#f5315a" stroke-width="2.1" stroke-linecap="round" stroke-linejoin="round" ><path d="M3 6h18"/><path d="M19 6v14c0 1-1 2-2 2H7c-1 0-2-1-2-2V6"/><path d="M8 6V4c0-1 1-2 2-2h4c1 0 2 1 2 2v2"/><line x1="10" x2="10" y1="11" y2="17"/><line x1="14" x2="14" y1="11" y2="17"/></svg>
<div class="row" style="top:446px"></div>
<div class="cb" style="left:122px;top:459px"></div>
<svg class="ic" style="left:187px;top:459px;width:13px;height:13px" viewBox="0 0 24 24" fill="none" stroke="green" stroke-width="2" stroke-linecap="round" stroke-linejoin="round" ><path d="M4 14a1 1 0 0 1-.78-1.63l9.9-10.2a.5.5 0 0 1 .86.46l-1.92 6.02A1 1 0 0 0 13 10h7a1 1 0 0 1 .78 1.63l-9.9 10.2a.5.5 0 0 1-.86-.46l1.92-6.02A1 1 0 0 0 11 14z"/></svg>
<div class="c" style="left:288px;width:200px;top:447px">更新用户</div>
<div class="tag" style="left:500px;top:455px;width:59px;background:#fffbec"></div>
<svg class="ic" style="left:508px;top:461.5px;width:12px;height:12px" viewBox="0 0 24 24" fill="none" stroke="#f0b23a" stroke-width="2" stroke-linecap="round" stroke-linejoin="round" ><path d="M4 14a1 1 0 0 1-.78-1.63l9.9-10.2a.5.5 0 0 1 .86.46l-1.92 6.02A1 1 0 0 0 13 10h7a1 1 0 0 1 .78 1.63l-9.9 10.2a.5.5 0 0 1-.86-.46l1.92-6.02A1 1 0 0 0 11 14z"/></svg>
<div class="a" style="left:528px;top:459px;font-size:12px;line-height:16px;color:#f0b23a">按钮</div>
<div class="c" style="left:583px;width:221px;top:447px">user:update</div>
<div class="c" style="left:1277px;width:80px;top:447px">30</div>
<div class="sw" style="left:1378px;top:455px"><span class="swt">启用</span><span class="knob"></span></div>
<div class="tag" style="left:1463px;top:455px;width:56px;background:#f5f5f6"></div>
<svg class="ic" style="left:1471px;top:460px;width:12px;height:12px" viewBox="0 0 24 24" fill="none" stroke="#555" stroke-width="2" stroke-linecap="round" stroke-linejoin="round" ><path d="M15 21v-8a1 1 0 0 0-1-1h-4a1 1 0 0 0-1 1v8"/><path d="M3 10a2 2 0 0 1 .709-1.528l7-5.999a2 2 0 0 1 2.582 0l7 5.999A2 2 0 0 1 21 10v9a2 2 0 0 1-2 2H5a2 2 0 0 1-2-2z"/></svg>
<div class="a" style="left:1487px;top:459px;font-size:12px;line-height:16px;color:#555">内部</div>
<div class="c" style="left:1536px;width:221px;top:447px">按钮权限</div>
<div class="ab" style="left:1776px;top:454px;background:#0068e6"></div>
<svg class="ic" style="left:1780px;top:458.5px;width:15px;height:15px" viewBox="0 0 24 24" fill="none" stroke="#fff" stroke-width="3.1" stroke-linecap="round" stroke-linejoin="round" ><path d="M5 12h14"/><path d="M12 5v14"/></svg>
<div class="ab" style="left:1806px;top:454px;border:1.5px solid #0068e6"></div>
<svg class="ic" style="left:1809px;top:457px;width:17px;height:17px" viewBox="0 0 24 24" fill="none" stroke="#4a8af4" stroke-width="2.1" stroke-linecap="round" stroke-linejoin="round" ><path d="M12 3H5a2 2 0 0 0-2 2v14a2 2 0 0 0 2 2h14a2 2 0 0 0 2-2v-7"/><path d="M18.375 2.625a1 1 0 0 1 3 3l-9.013 9.014a2 2 0 0 1-.853.505l-2.873.84a.5.5 0 0 1-.62-.62l.84-2.873a2 2 0 0 1 .506-.852z"/></svg>
<div class="ab" style="left:1836px;top:454px;border:1.5px solid #f5315a"></div>
<svg class="ic" style="left:1839.5px;top:457.5px;width:16.5px;height:16.5px" viewBox="0 0 24 24" fill="none" stroke="#f5315a" stroke-width="2.1" stroke-linecap="round" stroke-linejoin="round" ><path d="M3 6h18"/><path d="M19 6v14c0 1-1 2-2 2H7c-1 0-2-1-2-2V6"/><path d="M8 6V4c0-1 1-2 2-2h4c1 0 2 1 2 2v2"/><line x1="10" x2="10" y1="11" y2="17"/><line x1="14" x2="14" y1="11" y2="17"/></svg>
<div class="row" style="top:486px"></div>
<div class="cb" style="left:122px;top:499px"></div>
<svg class="ic" style="left:187px;top:499px;width:13px;height:13px" viewBox="0 0 24 24" fill="none" stroke="green" stroke-width="2" stroke-linecap="round" stroke-linejoin="round" ><path d="M4 14a1 1 0 0 1-.78-1.63l9.9-10.2a.5.5 0 0 1 .86.46l-1.92 6.02A1 1 0 0 0 13 10h7a1 1 0 0 1 .78 1.63l-9.9 10.2a.5.5 0 0 1-.86-.46l1.92-6.02A1 1 0 0 0 11 14z"/></svg>
<div class="c" style="left:288px;width:200px;top:487px">删除用户</div>
<div class="tag" style="left:500px;top:495px;width:59px;background:#fffbec"></div>
<svg class="ic" style="left:508px;top:501.5px;width:12px;height:12px" viewBox="0 0 24 24" fill="none" stroke="#f0b23a" stroke-width="2" stroke-linecap="round" stroke-linejoin="round" ><path d="M4 14a1 1 0 0 1-.78-1.63l9.9-10.2a.5.5 0 0 1 .86.46l-1.92 6.02A1 1 0 0 0 13 10h7a1 1 0 0 1 .78 1.63l-9.9 10.2a.5.5 0 0 1-.86-.46l1.92-6.02A1 1 0 0 0 11 14z"/></svg>
<div class="a" style="left:528px;top:499px;font-size:12px;line-height:16px;color:#f0b23a">按钮</div>
<div class="c" style="left:583px;width:221px;top:487px">user:delete</div>
<div class="c" style="left:1277px;width:80px;top:487px">40</div>
<div class="sw" style="left:1378px;top:495px"><span class="swt">启用</span><span class="knob"></span></div>
<div class="tag" style="left:1463px;top:495px;width:56px;background:#f5f5f6"></div>
<svg class="ic" style="left:1471px;top:500px;width:12px;height:12px" viewBox="0 0 24 24" fill="none" stroke="#555" stroke-width="2" stroke-linecap="round" stroke-linejoin="round" ><path d="M15 21v-8a1 1 0 0 0-1-1h-4a1 1 0 0 0-1 1v8"/><path d="M3 10a2 2 0 0 1 .709-1.528l7-5.999a2 2 0 0 1 2.582 0l7 5.999A2 2 0 0 1 21 10v9a2 2 0 0 1-2 2H5a2 2 0 0 1-2-2z"/></svg>
<div class="a" style="left:1487px;top:499px;font-size:12px;line-height:16px;color:#555">内部</div>
<div class="c" style="left:1536px;width:221px;top:487px">按钮权限</div>
<div class="ab" style="left:1776px;top:494px;background:#0068e6"></div>
<svg class="ic" style="left:1780px;top:498.5px;width:15px;height:15px" viewBox="0 0 24 24" fill="none" stroke="#fff" stroke-width="3.1" stroke-linecap="round" stroke-linejoin="round" ><path d="M5 12h14"/><path d="M12 5v14"/></svg>
<div class="ab" style="left:1806px;top:494px;border:1.5px solid #0068e6"></div>
<svg class="ic" style="left:1809px;top:497px;width:17px;height:17px" viewBox="0 0 24 24" fill="none" stroke="#4a8af4" stroke-width="2.1" stroke-linecap="round" stroke-linejoin="round" ><path d="M12 3H5a2 2 0 0 0-2 2v14a2 2 0 0 0 2 2h14a2 2 0 0 0 2-2v-7"/><path d="M18.375 2.625a1 1 0 0 1 3 3l-9.013 9.014a2 2 0 0 1-.853.505l-2.873.84a.5.5 0 0 1-.62-.62l.84-2.873a2 2 0 0 1 .506-.852z"/></svg>
<div class="ab" style="left:1836px;top:494px;border:1.5px solid #f5315a"></div>
<svg class="ic" style="left:1839.5px;top:497.5px;width:16.5px;height:16.5px" viewBox="0 0 24 24" fill="none" stroke="#f5315a" stroke-width="2.1" stroke-linecap="round" stroke-linejoin="round" ><path d="M3 6h18"/><path d="M19 6v14c0 1-1 2-2 2H7c-1 0-2-1-2-2V6"/><path d="M8 6V4c0-1 1-2 2-2h4c1 0 2 1 2 2v2"/><line x1="10" x2="10" y1="11" y2="17"/><line x1="14" x2="14" y1="11" y2="17"/></svg>
<div class="row" style="top:526px"></div>
<div class="cb" style="left:122px;top:539px"></div>
<svg class="ic" style="left:187px;top:539px;width:13px;height:13px" viewBox="0 0 24 24" fill="none" stroke="green" stroke-width="2" stroke-linecap="round" stroke-linejoin="round" ><path d="M4 14a1 1 0 0 1-.78-1.63l9.9-10.2a.5.5 0 0 1 .86.46l-1.92 6.02A1 1 0 0 0 13 10h7a1 1 0 0 1 .78 1.63l-9.9 10.2a.5.5 0 0 1-.86-.46l1.92-6.02A1 1 0 0 0 11 14z"/></svg>
<div class="c" style="left:288px;width:200px;top:527px">分配角色</div>
<div class="tag" style="left:500px;top:535px;width:59px;background:#fffbec"></div>
<svg class="ic" style="left:508px;top:541.5px;width:12px;height:12px" viewBox="0 0 24 24" fill="none" stroke="#f0b23a" stroke-width="2" stroke-linecap="round" stroke-linejoin="round" ><path d="M4 14a1 1 0 0 1-.78-1.63l9.9-10.2a.5.5 0 0 1 .86.46l-1.92 6.02A1 1 0 0 0 13 10h7a1 1 0 0 1 .78 1.63l-9.9 10.2a.5.5 0 0 1-.86-.46l1.92-6.02A1 1 0 0 0 11 14z"/></svg>
<div class="a" style="left:528px;top:539px;font-size:12px;line-height:16px;color:#f0b23a">按钮</div>
<div class="c" style="left:583px;width:221px;top:527px">user:assignRole</div>
<div class="c" style="left:1277px;width:80px;top:527px">50</div>
<div class="sw" style="left:1378px;top:535px"><span class="swt">启用</span><span class="knob"></span></div>
<div class="tag" style="left:1463px;top:535px;width:56px;background:#f5f5f6"></div>
<svg class="ic" style="left:1471px;top:540px;width:12px;height:12px" viewBox="0 0 24 24" fill="none" stroke="#555" stroke-width="2" stroke-linecap="round" stroke-linejoin="round" ><path d="M15 21v-8a1 1 0 0 0-1-1h-4a1 1 0 0 0-1 1v8"/><path d="M3 10a2 2 0 0 1 .709-1.528l7-5.999a2 2 0 0 1 2.582 0l7 5.999A2 2 0 0 1 21 10v9a2 2 0 0 1-2 2H5a2 2 0 0 1-2-2z"/></svg>
<div class="a" style="left:1487px;top:539px;font-size:12px;line-height:16px;color:#555">内部</div>
<div class="c" style="left:1536px;width:221px;top:527px">按钮权限</div>
<div class="ab" style="left:1776px;top:534px;background:#0068e6"></div>
<svg class="ic" style="left:1780px;top:538.5px;width:15px;height:15px" viewBox="0 0 24 24" fill="none" stroke="#fff" stroke-width="3.1" stroke-linecap="round" stroke-linejoin="round" ><path d="M5 12h14"/><path d="M12 5v14"/></svg>
<div class="ab" style="left:1806px;top:534px;border:1.5px solid #0068e6"></div>
<svg class="ic" style="left:1809px;top:537px;width:17px;height:17px" viewBox="0 0 24 24" fill="none" stroke="#4a8af4" stroke-width="2.1" stroke-linecap="round" stroke-linejoin="round" ><path d="M12 3H5a2 2 0 0 0-2 2v14a2 2 0 0 0 2 2h14a2 2 0 0 0 2-2v-7"/><path d="M18.375 2.625a1 1 0 0 1 3 3l-9.013 9.014a2 2 0 0 1-.853.505l-2.873.84a.5.5 0 0 1-.62-.62l.84-2.873a2 2 0 0 1 .506-.852z"/></svg>
<div class="ab" style="left:1836px;top:534px;border:1.5px solid #f5315a"></div>
<svg class="ic" style="left:1839.5px;top:537.5px;width:16.5px;height:16.5px" viewBox="0 0 24 24" fill="none" stroke="#f5315a" stroke-width="2.1" stroke-linecap="round" stroke-linejoin="round" ><path d="M3 6h18"/><path d="M19 6v14c0 1-1 2-2 2H7c-1 0-2-1-2-2V6"/><path d="M8 6V4c0-1 1-2 2-2h4c1 0 2 1 2 2v2"/><line x1="10" x2="10" y1="11" y2="17"/><line x1="14" x2="14" y1="11" y2="17"/></svg>
<div class="row" style="top:566px"></div>
<div class="cb" style="left:122px;top:579px"></div>
<svg class="ic" style="left:187px;top:579px;width:13px;height:13px" viewBox="0 0 24 24" fill="none" stroke="blue" stroke-width="2" stroke-linecap="round" stroke-linejoin="round" ><path d="M20 13c0 5-3.5 7.5-7.66 8.95a1 1 0 0 1-.67-.01C7.5 20.5 4 18 4 13V6a1 1 0 0 1 1-1c2 0 4.5-1.2 6.24-2.72a1.17 1.17 0 0 1 1.52 0C14.51 3.81 17 5 19 5a1 1 0 0 1 1 1z"/><path d="M9.1 9a3 3 0 0 1 5.82 1c0 2-3 3-3 3"/><path d="M12 17h.01"/></svg>
<svg class="ic" style="left:263px;top:584px;width:10px;height:6px" viewBox="0 0 10 6"><path d="M0 0H10L5 6Z" fill="#777"/></svg>
<div class="c" style="left:278px;width:200px;top:567px">角色管理</div>
<div class="tag" style="left:500px;top:575px;width:59px;background:#edfcf2"></div>
<svg class="ic" style="left:508px;top:581.5px;width:12px;height:12px" viewBox="0 0 24 24" fill="none" stroke="#45c07c" stroke-width="2" stroke-linecap="round" stroke-linejoin="round" ><path d="M15 2H6a2 2 0 0 0-2 2v16a2 2 0 0 0 2 2h12a2 2 0 0 0 2-2V7Z"/><path d="M14 2v4a2 2 0 0 0 2 2h4"/><path d="M10 9H8"/><path d="M16 13H8"/><path d="M16 17H8"/></svg>
<div class="a" style="left:528px;top:579px;font-size:12px;line-height:16px;color:#45c07c">菜单</div>
<div class="c" style="left:583px;width:221px;top:567px">iam:role</div>
<div class="c" style="left:804px;width:221px;top:567px">/iam/role</div>
<div class="c" style="left:1025px;width:251px;top:567px;letter-spacing:0.2px">modules/iam/role/index</div>
<div class="c" style="left:1277px;width:80px;top:567px">20</div>
<div class="sw" style="left:1378px;top:575px"><span class="swt">启用</span><span class="knob"></span></div>
<div class="tag" style="left:1463px;top:575px;width:56px;background:#f5f5f6"></div>
<svg class="ic" style="left:1471px;top:580px;width:12px;height:12px" viewBox="0 0 24 24" fill="none" stroke="#555" stroke-width="2" stroke-linecap="round" stroke-linejoin="round" ><path d="M15 21v-8a1 1 0 0 0-1-1h-4a1 1 0 0 0-1 1v8"/><path d="M3 10a2 2 0 0 1 .709-1.528l7-5.999a2 2 0 0 1 2.582 0l7 5.999A2 2 0 0 1 21 10v9a2 2 0 0 1-2 2H5a2 2 0 0 1-2-2z"/></svg>
<div class="a" style="left:1487px;top:579px;font-size:12px;line-height:16px;color:#555">内部</div>
<div class="c" style="left:1536px;width:221px;top:567px">角色管理页面</div>
<div class="ab" style="left:1776px;top:574px;background:#0068e6"></div>
<svg class="ic" style="left:1780px;top:578.5px;width:15px;height:15px" viewBox="0 0 24 24" fill="none" stroke="#fff" stroke-width="3.1" stroke-linecap="round" stroke-linejoin="round" ><path d="M5 12h14"/><path d="M12 5v14"/></svg>
<div class="ab" style="left:1806px;top:574px;border:1.5px solid #0068e6"></div>
<svg class="ic" style="left:1809px;top:577px;width:17px;height:17px" viewBox="0 0 24 24" fill="none" stroke="#4a8af4" stroke-width="2.1" stroke-linecap="round" stroke-linejoin="round" ><path d="M12 3H5a2 2 0 0 0-2 2v14a2 2 0 0 0 2 2h14a2 2 0 0 0 2-2v-7"/><path d="M18.375 2.625a1 1 0 0 1 3 3l-9.013 9.014a2 2 0 0 1-.853.505l-2.873.84a.5.5 0 0 1-.62-.62l.84-2.873a2 2 0 0 1 .506-.852z"/></svg>
<div class="ab" style="left:1836px;top:574px;border:1.5px solid #f5315a"></div>
<svg class="ic" style="left:1839.5px;top:577.5px;width:16.5px;height:16.5px" viewBox="0 0 24 24" fill="none" stroke="#f5315a" stroke-width="2.1" stroke-linecap="round" stroke-linejoin="round" ><path d="M3 6h18"/><path d="M19 6v14c0 1-1 2-2 2H7c-1 0-2-1-2-2V6"/><path d="M8 6V4c0-1 1-2 2-2h4c1 0 2 1 2 2v2"/><line x1="10" x2="10" y1="11" y2="17"/><line x1="14" x2="14" y1="11" y2="17"/></svg>
<div class="row" style="top:606px"></div>
<div class="cb" style="left:122px;top:619px"></div>
<svg class="ic" style="left:187px;top:619px;width:13px;height:13px" viewBox="0 0 24 24" fill="none" stroke="green" stroke-width="2" stroke-linecap="round" stroke-linejoin="round" ><path d="M4 14a1 1 0 0 1-.78-1.63l9.9-10.2a.5.5 0 0 1 .86.46l-1.92 6.02A1 1 0 0 0 13 10h7a1 1 0 0 1 .78 1.63l-9.9 10.2a.5.5 0 0 1-.86-.46l1.92-6.02A1 1 0 0 0 11 14z"/></svg>
<div class="c" style="left:288px;width:200px;top:607px">角色读取</div>
<div class="tag" style="left:500px;top:615px;width:59px;background:#fffbec"></div>
<svg class="ic" style="left:508px;top:621.5px;width:12px;height:12px" viewBox="0 0 24 24" fill="none" stroke="#f0b23a" stroke-width="2" stroke-linecap="round" stroke-linejoin="round" ><path d="M4 14a1 1 0 0 1-.78-1.63l9.9-10.2a.5.5 0 0 1 .86.46l-1.92 6.02A1 1 0 0 0 13 10h7a1 1 0 0 1 .78 1.63l-9.9 10.2a.5.5 0 0 1-.86-.46l1.92-6.02A1 1 0 0 0 11 14z"/></svg>
<div class="a" style="left:528px;top:619px;font-size:12px;line-height:16px;color:#f0b23a">按钮</div>
<div class="c" style="left:583px;width:221px;top:607px">role:read</div>
<div class="c" style="left:1277px;width:80px;top:607px">10</div>
<div class="sw" style="left:1378px;top:615px"><span class="swt">启用</span><span class="knob"></span></div>
<div class="tag" style="left:1463px;top:615px;width:56px;background:#f5f5f6"></div>
<svg class="ic" style="left:1471px;top:620px;width:12px;height:12px" viewBox="0 0 24 24" fill="none" stroke="#555" stroke-width="2" stroke-linecap="round" stroke-linejoin="round" ><path d="M15 21v-8a1 1 0 0 0-1-1h-4a1 1 0 0 0-1 1v8"/><path d="M3 10a2 2 0 0 1 .709-1.528l7-5.999a2 2 0 0 1 2.582 0l7 5.999A2 2 0 0 1 21 10v9a2 2 0 0 1-2 2H5a2 2 0 0 1-2-2z"/></svg>
<div class="a" style="left:1487px;top:619px;font-size:12px;line-height:16px;color:#555">内部</div>
<div class="c" style="left:1536px;width:221px;top:607px">按钮权限</div>
<div class="ab" style="left:1776px;top:614px;background:#0068e6"></div>
<svg class="ic" style="left:1780px;top:618.5px;width:15px;height:15px" viewBox="0 0 24 24" fill="none" stroke="#fff" stroke-width="3.1" stroke-linecap="round" stroke-linejoin="round" ><path d="M5 12h14"/><path d="M12 5v14"/></svg>
<div class="ab" style="left:1806px;top:614px;border:1.5px solid #0068e6"></div>
<svg class="ic" style="left:1809px;top:617px;width:17px;height:17px" viewBox="0 0 24 24" fill="none" stroke="#4a8af4" stroke-width="2.1" stroke-linecap="round" stroke-linejoin="round" ><path d="M12 3H5a2 2 0 0 0-2 2v14a2 2 0 0 0 2 2h14a2 2 0 0 0 2-2v-7"/><path d="M18.375 2.625a1 1 0 0 1 3 3l-9.013 9.014a2 2 0 0 1-.853.505l-2.873.84a.5.5 0 0 1-.62-.62l.84-2.873a2 2 0 0 1 .506-.852z"/></svg>
<div class="ab" style="left:1836px;top:614px;border:1.5px solid #f5315a"></div>
<svg class="ic" style="left:1839.5px;top:617.5px;width:16.5px;height:16.5px" viewBox="0 0 24 24" fill="none" stroke="#f5315a" stroke-width="2.1" stroke-linecap="round" stroke-linejoin="round" ><path d="M3 6h18"/><path d="M19 6v14c0 1-1 2-2 2H7c-1 0-2-1-2-2V6"/><path d="M8 6V4c0-1 1-2 2-2h4c1 0 2 1 2 2v2"/><line x1="10" x2="10" y1="11" y2="17"/><line x1="14" x2="14" y1="11" y2="17"/></svg>
<div class="row" style="top:646px"></div>
<div class="cb" style="left:122px;top:659px"></div>
<svg class="ic" style="left:187px;top:659px;width:13px;height:13px" viewBox="0 0 24 24" fill="none" stroke="green" stroke-width="2" stroke-linecap="round" stroke-linejoin="round" ><path d="M4 14a1 1 0 0 1-.78-1.63l9.9-10.2a.5.5 0 0 1 .86.46l-1.92 6.02A1 1 0 0 0 13 10h7a1 1 0 0 1 .78 1.63l-9.9 10.2a.5.5 0 0 1-.86-.46l1.92-6.02A1 1 0 0 0 11 14z"/></svg>
<div class="c" style="left:288px;width:200px;top:647px">角色创建</div>
<div class="tag" style="left:500px;top:655px;width:59px;background:#fffbec"></div>
<svg class="ic" style="left:508px;top:661.5px;width:12px;height:12px" viewBox="0 0 24 24" fill="none" stroke="#f0b23a" stroke-width="2" stroke-linecap="round" stroke-linejoin="round" ><path d="M4 14a1 1 0 0 1-.78-1.63l9.9-10.2a.5.5 0 0 1 .86.46l-1.92 6.02A1 1 0 0 0 13 10h7a1 1 0 0 1 .78 1.63l-9.9 10.2a.5.5 0 0 1-.86-.46l1.92-6.02A1 1 0 0 0 11 14z"/></svg>
<div class="a" style="left:528px;top:659px;font-size:12px;line-height:16px;color:#f0b23a">按钮</div>
<div class="c" style="left:583px;width:221px;top:647px">role:create</div>
<div class="c" style="left:1277px;width:80px;top:647px">20</div>
<div class="sw" style="left:1378px;top:655px"><span class="swt">启用</span><span class="knob"></span></div>
<div class="tag" style="left:1463px;top:655px;width:56px;background:#f5f5f6"></div>
<svg class="ic" style="left:1471px;top:660px;width:12px;height:12px" viewBox="0 0 24 24" fill="none" stroke="#555" stroke-width="2" stroke-linecap="round" stroke-linejoin="round" ><path d="M15 21v-8a1 1 0 0 0-1-1h-4a1 1 0 0 0-1 1v8"/><path d="M3 10a2 2 0 0 1 .709-1.528l7-5.999a2 2 0 0 1 2.582 0l7 5.999A2 2 0 0 1 21 10v9a2 2 0 0 1-2 2H5a2 2 0 0 1-2-2z"/></svg>
<div class="a" style="left:1487px;top:659px;font-size:12px;line-height:16px;color:#555">内部</div>
<div class="c" style="left:1536px;width:221px;top:647px">按钮权限</div>
<div class="ab" style="left:1776px;top:654px;background:#0068e6"></div>
<svg class="ic" style="left:1780px;top:658.5px;width:15px;height:15px" viewBox="0 0 24 24" fill="none" stroke="#fff" stroke-width="3.1" stroke-linecap="round" stroke-linejoin="round" ><path d="M5 12h14"/><path d="M12 5v14"/></svg>
<div class="ab" style="left:1806px;top:654px;border:1.5px solid #0068e6"></div>
<svg class="ic" style="left:1809px;top:657px;width:17px;height:17px" viewBox="0 0 24 24" fill="none" stroke="#4a8af4" stroke-width="2.1" stroke-linecap="round" stroke-linejoin="round" ><path d="M12 3H5a2 2 0 0 0-2 2v14a2 2 0 0 0 2 2h14a2 2 0 0 0 2-2v-7"/><path d="M18.375 2.625a1 1 0 0 1 3 3l-9.013 9.014a2 2 0 0 1-.853.505l-2.873.84a.5.5 0 0 1-.62-.62l.84-2.873a2 2 0 0 1 .506-.852z"/></svg>
<div class="ab" style="left:1836px;top:654px;border:1.5px solid #f5315a"></div>
<svg class="ic" style="left:1839.5px;top:657.5px;width:16.5px;height:16.5px" viewBox="0 0 24 24" fill="none" stroke="#f5315a" stroke-width="2.1" stroke-linecap="round" stroke-linejoin="round" ><path d="M3 6h18"/><path d="M19 6v14c0 1-1 2-2 2H7c-1 0-2-1-2-2V6"/><path d="M8 6V4c0-1 1-2 2-2h4c1 0 2 1 2 2v2"/><line x1="10" x2="10" y1="11" y2="17"/><line x1="14" x2="14" y1="11" y2="17"/></svg>
<div class="row" style="top:686px"></div>
<div class="cb" style="left:122px;top:699px"></div>
<svg class="ic" style="left:187px;top:699px;width:13px;height:13px" viewBox="0 0 24 24" fill="none" stroke="green" stroke-width="2" stroke-linecap="round" stroke-linejoin="round" ><path d="M4 14a1 1 0 0 1-.78-1.63l9.9-10.2a.5.5 0 0 1 .86.46l-1.92 6.02A1 1 0 0 0 13 10h7a1 1 0 0 1 .78 1.63l-9.9 10.2a.5.5 0 0 1-.86-.46l1.92-6.02A1 1 0 0 0 11 14z"/></svg>
<div class="c" style="left:288px;width:200px;top:687px">角色更新</div>
<div class="tag" style="left:500px;top:695px;width:59px;background:#fffbec"></div>
<svg class="ic" style="left:508px;top:701.5px;width:12px;height:12px" viewBox="0 0 24 24" fill="none" stroke="#f0b23a" stroke-width="2" stroke-linecap="round" stroke-linejoin="round" ><path d="M4 14a1 1 0 0 1-.78-1.63l9.9-10.2a.5.5 0 0 1 .86.46l-1.92 6.02A1 1 0 0 0 13 10h7a1 1 0 0 1 .78 1.63l-9.9 10.2a.5.5 0 0 1-.86-.46l1.92-6.02A1 1 0 0 0 11 14z"/></svg>
<div class="a" style="left:528px;top:699px;font-size:12px;line-height:16px;color:#f0b23a">按钮</div>
<div class="c" style="left:583px;width:221px;top:687px">role:update</div>
<div class="c" style="left:1277px;width:80px;top:687px">30</div>
<div class="sw" style="left:1378px;top:695px"><span class="swt">启用</span><span class="knob"></span></div>
<div class="tag" style="left:1463px;top:695px;width:56px;background:#f5f5f6"></div>
<svg class="ic" style="left:1471px;top:700px;width:12px;height:12px" viewBox="0 0 24 24" fill="none" stroke="#555" stroke-width="2" stroke-linecap="round" stroke-linejoin="round" ><path d="M15 21v-8a1 1 0 0 0-1-1h-4a1 1 0 0 0-1 1v8"/><path d="M3 10a2 2 0 0 1 .709-1.528l7-5.999a2 2 0 0 1 2.582 0l7 5.999A2 2 0 0 1 21 10v9a2 2 0 0 1-2 2H5a2 2 0 0 1-2-2z"/></svg>
<div class="a" style="left:1487px;top:699px;font-size:12px;line-height:16px;color:#555">内部</div>
<div class="c" style="left:1536px;width:221px;top:687px">按钮权限</div>
<div class="ab" style="left:1776px;top:694px;background:#0068e6"></div>
<svg class="ic" style="left:1780px;top:698.5px;width:15px;height:15px" viewBox="0 0 24 24" fill="none" stroke="#fff" stroke-width="3.1" stroke-linecap="round" stroke-linejoin="round" ><path d="M5 12h14"/><path d="M12 5v14"/></svg>
<div class="ab" style="left:1806px;top:694px;border:1.5px solid #0068e6"></div>
<svg class="ic" style="left:1809px;top:697px;width:17px;height:17px" viewBox="0 0 24 24" fill="none" stroke="#4a8af4" stroke-width="2.1" stroke-linecap="round" stroke-linejoin="round" ><path d="M12 3H5a2 2 0 0 0-2 2v14a2 2 0 0 0 2 2h14a2 2 0 0 0 2-2v-7"/><path d="M18.375 2.625a1 1 0 0 1 3 3l-9.013 9.014a2 2 0 0 1-.853.505l-2.873.84a.5.5 0 0 1-.62-.62l.84-2.873a2 2 0 0 1 .506-.852z"/></svg>
<div class="ab" style="left:1836px;top:694px;border:1.5px solid #f5315a"></div>
<svg class="ic" style="left:1839.5px;top:697.5px;width:16.5px;height:16.5px" viewBox="0 0 24 24" fill="none" stroke="#f5315a" stroke-width="2.1" stroke-linecap="round" stroke-linejoin="round" ><path d="M3 6h18"/><path d="M19 6v14c0 1-1 2-2 2H7c-1 0-2-1-2-2V6"/><path d="M8 6V4c0-1 1-2 2-2h4c1 0 2 1 2 2v2"/><line x1="10" x2="10" y1="11" y2="17"/><line x1="14" x2="14" y1="11" y2="17"/></svg>
<div class="row" style="top:726px"></div>
<div class="cb" style="left:122px;top:739px"></div>
<svg class="ic" style="left:187px;top:739px;width:13px;height:13px" viewBox="0 0 24 24" fill="none" stroke="green" stroke-width="2" stroke-linecap="round" stroke-linejoin="round" ><path d="M4 14a1 1 0 0 1-.78-1.63l9.9-10.2a.5.5 0 0 1 .86.46l-1.92 6.02A1 1 0 0 0 13 10h7a1 1 0 0 1 .78 1.63l-9.9 10.2a.5.5 0 0 1-.86-.46l1.92-6.02A1 1 0 0 0 11 14z"/></svg>
<div class="c" style="left:288px;width:200px;top:727px">角色删除</div>
<div class="tag" style="left:500px;top:735px;width:59px;background:#fffbec"></div>
<svg class="ic" style="left:508px;top:741.5px;width:12px;height:12px" viewBox="0 0 24 24" fill="none" stroke="#f0b23a" stroke-width="2" stroke-linecap="round" stroke-linejoin="round" ><path d="M4 14a1 1 0 0 1-.78-1.63l9.9-10.2a.5.5 0 0 1 .86.46l-1.92 6.02A1 1 0 0 0 13 10h7a1 1 0 0 1 .78 1.63l-9.9 10.2a.5.5 0 0 1-.86-.46l1.92-6.02A1 1 0 0 0 11 14z"/></svg>
<div class="a" style="left:528px;top:739px;font-size:12px;line-height:16px;color:#f0b23a">按钮</div>
<div class="c" style="left:583px;width:221px;top:727px">role:delete</div>
<div class="c" style="left:1277px;width:80px;top:727px">40</div>
<div class="sw" style="left:1378px;top:735px"><span class="swt">启用</span><span class="knob"></span></div>
<div class="tag" style="left:1463px;top:735px;width:56px;background:#f5f5f6"></div>
<svg class="ic" style="left:1471px;top:740px;width:12px;height:12px" viewBox="0 0 24 24" fill="none" stroke="#555" stroke-width="2" stroke-linecap="round" stroke-linejoin="round" ><path d="M15 21v-8a1 1 0 0 0-1-1h-4a1 1 0 0 0-1 1v8"/><path d="M3 10a2 2 0 0 1 .709-1.528l7-5.999a2 2 0 0 1 2.582 0l7 5.999A2 2 0 0 1 21 10v9a2 2 0 0 1-2 2H5a2 2 0 0 1-2-2z"/></svg>
<div class="a" style="left:1487px;top:739px;font-size:12px;line-height:16px;color:#555">内部</div>
<div class="c" style="left:1536px;width:221px;top:727px">按钮权限</div>
<div class="ab" style="left:1776px;top:734px;background:#0068e6"></div>
<svg class="ic" style="left:1780px;top:738.5px;width:15px;height:15px" viewBox="0 0 24 24" fill="none" stroke="#fff" stroke-width="3.1" stroke-linecap="round" stroke-linejoin="round" ><path d="M5 12h14"/><path d="M12 5v14"/></svg>
<div class="ab" style="left:1806px;top:734px;border:1.5px solid #0068e6"></div>
<svg class="ic" style="left:1809px;top:737px;width:17px;height:17px" viewBox="0 0 24 24" fill="none" stroke="#4a8af4" stroke-width="2.1" stroke-linecap="round" stroke-linejoin="round" ><path d="M12 3H5a2 2 0 0 0-2 2v14a2 2 0 0 0 2 2h14a2 2 0 0 0 2-2v-7"/><path d="M18.375 2.625a1 1 0 0 1 3 3l-9.013 9.014a2 2 0 0 1-.853.505l-2.873.84a.5.5 0 0 1-.62-.62l.84-2.873a2 2 0 0 1 .506-.852z"/></svg>
<div class="ab" style="left:1836px;top:734px;border:1.5px solid #f5315a"></div>
<svg class="ic" style="left:1839.5px;top:737.5px;width:16.5px;height:16.5px" viewBox="0 0 24 24" fill="none" stroke="#f5315a" stroke-width="2.1" stroke-linecap="round" stroke-linejoin="round" ><path d="M3 6h18"/><path d="M19 6v14c0 1-1 2-2 2H7c-1 0-2-1-2-2V6"/><path d="M8 6V4c0-1 1-2 2-2h4c1 0 2 1 2 2v2"/><line x1="10" x2="10" y1="11" y2="17"/><line x1="14" x2="14" y1="11" y2="17"/></svg>
<div class="row" style="top:766px"></div>
<div class="cb" style="left:122px;top:779px"></div>
<svg class="ic" style="left:187px;top:779px;width:13px;height:13px" viewBox="0 0 24 24" fill="none" stroke="green" stroke-width="2" stroke-linecap="round" stroke-linejoin="round" ><path d="M4 14a1 1 0 0 1-.78-1.63l9.9-10.2a.5.5 0 0 1 .86.46l-1.92 6.02A1 1 0 0 0 13 10h7a1 1 0 0 1 .78 1.63l-9.9 10.2a.5.5 0 0 1-.86-.46l1.92-6.02A1 1 0 0 0 11 14z"/></svg>
<div class="c" style="left:288px;width:200px;top:767px">分配菜单</div>
<div class="tag" style="left:500px;top:775px;width:59px;background:#fffbec"></div>
<svg class="ic" style="left:508px;top:781.5px;width:12px;height:12px" viewBox="0 0 24 24" fill="none" stroke="#f0b23a" stroke-width="2" stroke-linecap="round" stroke-linejoin="round" ><path d="M4 14a1 1 0 0 1-.78-1.63l9.9-10.2a.5.5 0 0 1 .86.46l-1.92 6.02A1 1 0 0 0 13 10h7a1 1 0 0 1 .78 1.63l-9.9 10.2a.5.5 0 0 1-.86-.46l1.92-6.02A1 1 0 0 0 11 14z"/></svg>
<div class="a" style="left:528px;top:779px;font-size:12px;line-height:16px;color:#f0b23a">按钮</div>
<div class="c" style="left:583px;width:221px;top:767px">role:assignMenu</div>
<div class="c" style="left:1277px;width:80px;top:767px">50</div>
<div class="sw" style="left:1378px;top:775px"><span class="swt">启用</span><span class="knob"></span></div>
<div class="tag" style="left:1463px;top:775px;width:56px;background:#f5f5f6"></div>
<svg class="ic" style="left:1471px;top:780px;width:12px;height:12px" viewBox="0 0 24 24" fill="none" stroke="#555" stroke-width="2" stroke-linecap="round" stroke-linejoin="round" ><path d="M15 21v-8a1 1 0 0 0-1-1h-4a1 1 0 0 0-1 1v8"/><path d="M3 10a2 2 0 0 1 .709-1.528l7-5.999a2 2 0 0 1 2.582 0l7 5.999A2 2 0 0 1 21 10v9a2 2 0 0 1-2 2H5a2 2 0 0 1-2-2z"/></svg>
<div class="a" style="left:1487px;top:779px;font-size:12px;line-height:16px;color:#555">内部</div>
<div class="c" style="left:1536px;width:221px;top:767px">按钮权限</div>
<div class="ab" style="left:1776px;top:774px;background:#0068e6"></div>
<svg class="ic" style="left:1780px;top:778.5px;width:15px;height:15px" viewBox="0 0 24 24" fill="none" stroke="#fff" stroke-width="3.1" stroke-linecap="round" stroke-linejoin="round" ><path d="M5 12h14"/><path d="M12 5v14"/></svg>
<div class="ab" style="left:1806px;top:774px;border:1.5px solid #0068e6"></div>
<svg class="ic" style="left:1809px;top:777px;width:17px;height:17px" viewBox="0 0 24 24" fill="none" stroke="#4a8af4" stroke-width="2.1" stroke-linecap="round" stroke-linejoin="round" ><path d="M12 3H5a2 2 0 0 0-2 2v14a2 2 0 0 0 2 2h14a2 2 0 0 0 2-2v-7"/><path d="M18.375 2.625a1 1 0 0 1 3 3l-9.013 9.014a2 2 0 0 1-.853.505l-2.873.84a.5.5 0 0 1-.62-.62l.84-2.873a2 2 0 0 1 .506-.852z"/></svg>
<div class="ab" style="left:1836px;top:774px;border:1.5px solid #f5315a"></div>
<svg class="ic" style="left:1839.5px;top:777.5px;width:16.5px;height:16.5px" viewBox="0 0 24 24" fill="none" stroke="#f5315a" stroke-width="2.1" stroke-linecap="round" stroke-linejoin="round" ><path d="M3 6h18"/><path d="M19 6v14c0 1-1 2-2 2H7c-1 0-2-1-2-2V6"/><path d="M8 6V4c0-1 1-2 2-2h4c1 0 2 1 2 2v2"/><line x1="10" x2="10" y1="11" y2="17"/><line x1="14" x2="14" y1="11" y2="17"/></svg>
<div class="row" style="top:806px"></div>
<div class="cb" style="left:122px;top:819px"></div>
<svg class="ic" style="left:187px;top:819px;width:13px;height:13px" viewBox="0 0 24 24" fill="none" stroke="blue" stroke-width="2" stroke-linecap="round" stroke-linejoin="round" ><path d="M20 13c0 5-3.5 7.5-7.66 8.95a1 1 0 0 1-.67-.01C7.5 20.5 4 18 4 13V6a1 1 0 0 1 1-1c2 0 4.5-1.2 6.24-2.72a1.17 1.17 0 0 1 1.52 0C14.51 3.81 17 5 19 5a1 1 0 0 1 1 1z"/></svg>
<svg class="ic" style="left:263px;top:824px;width:10px;height:6px" viewBox="0 0 10 6"><path d="M0 0H10L5 6Z" fill="#777"/></svg>
<div class="c" style="left:278px;width:200px;top:807px">部门管理</div>
<div class="tag" style="left:500px;top:815px;width:59px;background:#edfcf2"></div>
<svg class="ic" style="left:508px;top:821.5px;width:12px;height:12px" viewBox="0 0 24 24" fill="none" stroke="#45c07c" stroke-width="2" stroke-linecap="round" stroke-linejoin="round" ><path d="M15 2H6a2 2 0 0 0-2 2v16a2 2 0 0 0 2 2h12a2 2 0 0 0 2-2V7Z"/><path d="M14 2v4a2 2 0 0 0 2 2h4"/><path d="M10 9H8"/><path d="M16 13H8"/><path d="M16 17H8"/></svg>
<div class="a" style="left:528px;top:819px;font-size:12px;line-height:16px;color:#45c07c">菜单</div>
<div class="c" style="left:583px;width:221px;top:807px">iam:dept</div>
<div class="c" style="left:804px;width:221px;top:807px">/iam/dept</div>
<div class="c" style="left:1025px;width:251px;top:807px;letter-spacing:0.2px">modules/iam/dept/index</div>
<div class="c" style="left:1277px;width:80px;top:807px">30</div>
<div class="sw" style="left:1378px;top:815px"><span class="swt">启用</span><span class="knob"></span></div>
<div class="tag" style="left:1463px;top:815px;width:56px;background:#f5f5f6"></div>
<svg class="ic" style="left:1471px;top:820px;width:12px;height:12px" viewBox="0 0 24 24" fill="none" stroke="#555" stroke-width="2" stroke-linecap="round" stroke-linejoin="round" ><path d="M15 21v-8a1 1 0 0 0-1-1h-4a1 1 0 0 0-1 1v8"/><path d="M3 10a2 2 0 0 1 .709-1.528l7-5.999a2 2 0 0 1 2.582 0l7 5.999A2 2 0 0 1 21 10v9a2 2 0 0 1-2 2H5a2 2 0 0 1-2-2z"/></svg>
<div class="a" style="left:1487px;top:819px;font-size:12px;line-height:16px;color:#555">内部</div>
<div class="c" style="left:1536px;width:221px;top:807px">部门管理页面</div>
<div class="ab" style="left:1776px;top:814px;background:#0068e6"></div>
<svg class="ic" style="left:1780px;top:818.5px;width:15px;height:15px" viewBox="0 0 24 24" fill="none" stroke="#fff" stroke-width="3.1" stroke-linecap="round" stroke-linejoin="round" ><path d="M5 12h14"/><path d="M12 5v14"/></svg>
<div class="ab" style="left:1806px;top:814px;border:1.5px solid #0068e6"></div>
<svg class="ic" style="left:1809px;top:817px;width:17px;height:17px" viewBox="0 0 24 24" fill="none" stroke="#4a8af4" stroke-width="2.1" stroke-linecap="round" stroke-linejoin="round" ><path d="M12 3H5a2 2 0 0 0-2 2v14a2 2 0 0 0 2 2h14a2 2 0 0 0 2-2v-7"/><path d="M18.375 2.625a1 1 0 0 1 3 3l-9.013 9.014a2 2 0 0 1-.853.505l-2.873.84a.5.5 0 0 1-.62-.62l.84-2.873a2 2 0 0 1 .506-.852z"/></svg>
<div class="ab" style="left:1836px;top:814px;border:1.5px solid #f5315a"></div>
<svg class="ic" style="left:1839.5px;top:817.5px;width:16.5px;height:16.5px" viewBox="0 0 24 24" fill="none" stroke="#f5315a" stroke-width="2.1" stroke-linecap="round" stroke-linejoin="round" ><path d="M3 6h18"/><path d="M19 6v14c0 1-1 2-2 2H7c-1 0-2-1-2-2V6"/><path d="M8 6V4c0-1 1-2 2-2h4c1 0 2 1 2 2v2"/><line x1="10" x2="10" y1="11" y2="17"/><line x1="14" x2="14" y1="11" y2="17"/></svg>
<div class="row" style="top:846px"></div>
<div class="cb" style="left:122px;top:859px"></div>
<svg class="ic" style="left:187px;top:859px;width:13px;height:13px" viewBox="0 0 24 24" fill="none" stroke="green" stroke-width="2" stroke-linecap="round" stroke-linejoin="round" ><path d="M4 14a1 1 0 0 1-.78-1.63l9.9-10.2a.5.5 0 0 1 .86.46l-1.92 6.02A1 1 0 0 0 13 10h7a1 1 0 0 1 .78 1.63l-9.9 10.2a.5.5 0 0 1-.86-.46l1.92-6.02A1 1 0 0 0 11 14z"/></svg>
<div class="c" style="left:288px;width:200px;top:847px">读取部门</div>
<div class="tag" style="left:500px;top:855px;width:59px;background:#fffbec"></div>
<svg class="ic" style="left:508px;top:861.5px;width:12px;height:12px" viewBox="0 0 24 24" fill="none" stroke="#f0b23a" stroke-width="2" stroke-linecap="round" stroke-linejoin="round" ><path d="M4 14a1 1 0 0 1-.78-1.63l9.9-10.2a.5.5 0 0 1 .86.46l-1.92 6.02A1 1 0 0 0 13 10h7a1 1 0 0 1 .78 1.63l-9.9 10.2a.5.5 0 0 1-.86-.46l1.92-6.02A1 1 0 0 0 11 14z"/></svg>
<div class="a" style="left:528px;top:859px;font-size:12px;line-height:16px;color:#f0b23a">按钮</div>
<div class="c" style="left:583px;width:221px;top:847px">dept:read</div>
<div class="c" style="left:1277px;width:80px;top:847px">10</div>
<div class="sw" style="left:1378px;top:855px"><span class="swt">启用</span><span class="knob"></span></div>
<div class="tag" style="left:1463px;top:855px;width:56px;background:#f5f5f6"></div>
<svg class="ic" style="left:1471px;top:860px;width:12px;height:12px" viewBox="0 0 24 24" fill="none" stroke="#555" stroke-width="2" stroke-linecap="round" stroke-linejoin="round" ><path d="M15 21v-8a1 1 0 0 0-1-1h-4a1 1 0 0 0-1 1v8"/><path d="M3 10a2 2 0 0 1 .709-1.528l7-5.999a2 2 0 0 1 2.582 0l7 5.999A2 2 0 0 1 21 10v9a2 2 0 0 1-2 2H5a2 2 0 0 1-2-2z"/></svg>
<div class="a" style="left:1487px;top:859px;font-size:12px;line-height:16px;color:#555">内部</div>
<div class="c" style="left:1536px;width:221px;top:847px">按钮权限</div>
<div class="ab" style="left:1776px;top:854px;background:#0068e6"></div>
<svg class="ic" style="left:1780px;top:858.5px;width:15px;height:15px" viewBox="0 0 24 24" fill="none" stroke="#fff" stroke-width="3.1" stroke-linecap="round" stroke-linejoin="round" ><path d="M5 12h14"/><path d="M12 5v14"/></svg>
<div class="ab" style="left:1806px;top:854px;border:1.5px solid #0068e6"></div>
<svg class="ic" style="left:1809px;top:857px;width:17px;height:17px" viewBox="0 0 24 24" fill="none" stroke="#4a8af4" stroke-width="2.1" stroke-linecap="round" stroke-linejoin="round" ><path d="M12 3H5a2 2 0 0 0-2 2v14a2 2 0 0 0 2 2h14a2 2 0 0 0 2-2v-7"/><path d="M18.375 2.625a1 1 0 0 1 3 3l-9.013 9.014a2 2 0 0 1-.853.505l-2.873.84a.5.5 0 0 1-.62-.62l.84-2.873a2 2 0 0 1 .506-.852z"/></svg>
<div class="ab" style="left:1836px;top:854px;border:1.5px solid #f5315a"></div>
<svg class="ic" style="left:1839.5px;top:857.5px;width:16.5px;height:16.5px" viewBox="0 0 24 24" fill="none" stroke="#f5315a" stroke-width="2.1" stroke-linecap="round" stroke-linejoin="round" ><path d="M3 6h18"/><path d="M19 6v14c0 1-1 2-2 2H7c-1 0-2-1-2-2V6"/><path d="M8 6V4c0-1 1-2 2-2h4c1 0 2 1 2 2v2"/><line x1="10" x2="10" y1="11" y2="17"/><line x1="14" x2="14" y1="11" y2="17"/></svg>
<div class="row" style="top:886px"></div>
<div class="cb" style="left:122px;top:899px"></div>
<svg class="ic" style="left:187px;top:899px;width:13px;height:13px" viewBox="0 0 24 24" fill="none" stroke="green" stroke-width="2" stroke-linecap="round" stroke-linejoin="round" ><path d="M4 14a1 1 0 0 1-.78-1.63l9.9-10.2a.5.5 0 0 1 .86.46l-1.92 6.02A1 1 0 0 0 13 10h7a1 1 0 0 1 .78 1.63l-9.9 10.2a.5.5 0 0 1-.86-.46l1.92-6.02A1 1 0 0 0 11 14z"/></svg>
<div class="c" style="left:288px;width:200px;top:887px">创建部门</div>
<div class="tag" style="left:500px;top:895px;width:59px;background:#fffbec"></div>
<svg class="ic" style="left:508px;top:901.5px;width:12px;height:12px" viewBox="0 0 24 24" fill="none" stroke="#f0b23a" stroke-width="2" stroke-linecap="round" stroke-linejoin="round" ><path d="M4 14a1 1 0 0 1-.78-1.63l9.9-10.2a.5.5 0 0 1 .86.46l-1.92 6.02A1 1 0 0 0 13 10h7a1 1 0 0 1 .78 1.63l-9.9 10.2a.5.5 0 0 1-.86-.46l1.92-6.02A1 1 0 0 0 11 14z"/></svg>
<div class="a" style="left:528px;top:899px;font-size:12px;line-height:16px;color:#f0b23a">按钮</div>
<div class="c" style="left:583px;width:221px;top:887px">dept:create</div>
<div class="c" style="left:1277px;width:80px;top:887px">20</div>
<div class="sw" style="left:1378px;top:895px"><span class="swt">启用</span><span class="knob"></span></div>
<div class="tag" style="left:1463px;top:895px;width:56px;background:#f5f5f6"></div>
<svg class="ic" style="left:1471px;top:900px;width:12px;height:12px" viewBox="0 0 24 24" fill="none" stroke="#555" stroke-width="2" stroke-linecap="round" stroke-linejoin="round" ><path d="M15 21v-8a1 1 0 0 0-1-1h-4a1 1 0 0 0-1 1v8"/><path d="M3 10a2 2 0 0 1 .709-1.528l7-5.999a2 2 0 0 1 2.582 0l7 5.999A2 2 0 0 1 21 10v9a2 2 0 0 1-2 2H5a2 2 0 0 1-2-2z"/></svg>
<div class="a" style="left:1487px;top:899px;font-size:12px;line-height:16px;color:#555">内部</div>
<div class="c" style="left:1536px;width:221px;top:887px">按钮权限</div>
<div class="ab" style="left:1776px;top:894px;background:#0068e6"></div>
<svg class="ic" style="left:1780px;top:898.5px;width:15px;height:15px" viewBox="0 0 24 24" fill="none" stroke="#fff" stroke-width="3.1" stroke-linecap="round" stroke-linejoin="round" ><path d="M5 12h14"/><path d="M12 5v14"/></svg>
<div class="ab" style="left:1806px;top:894px;border:1.5px solid #0068e6"></div>
<svg class="ic" style="left:1809px;top:897px;width:17px;height:17px" viewBox="0 0 24 24" fill="none" stroke="#4a8af4" stroke-width="2.1" stroke-linecap="round" stroke-linejoin="round" ><path d="M12 3H5a2 2 0 0 0-2 2v14a2 2 0 0 0 2 2h14a2 2 0 0 0 2-2v-7"/><path d="M18.375 2.625a1 1 0 0 1 3 3l-9.013 9.014a2 2 0 0 1-.853.505l-2.873.84a.5.5 0 0 1-.62-.62l.84-2.873a2 2 0 0 1 .506-.852z"/></svg>
<div class="ab" style="left:1836px;top:894px;border:1.5px solid #f5315a"></div>
<svg class="ic" style="left:1839.5px;top:897.5px;width:16.5px;height:16.5px" viewBox="0 0 24 24" fill="none" stroke="#f5315a" stroke-width="2.1" stroke-linecap="round" stroke-linejoin="round" ><path d="M3 6h18"/><path d="M19 6v14c0 1-1 2-2 2H7c-1 0-2-1-2-2V6"/><path d="M8 6V4c0-1 1-2 2-2h4c1 0 2 1 2 2v2"/><line x1="10" x2="10" y1="11" y2="17"/><line x1="14" x2="14" y1="11" y2="17"/></svg>
<div class="sep" style="left:1877px;top:247px;height:682px;background:#e3e3e6"></div>
<div class="a" style="left:1878px;top:286px;width:9px;height:246px;background:#e3e3e6;border-radius:0 0 5px 5px"></div>
<div class="a" style="left:105px;top:926px;width:1772px;height:3px;background:#fff"></div>
</div></body></html>
